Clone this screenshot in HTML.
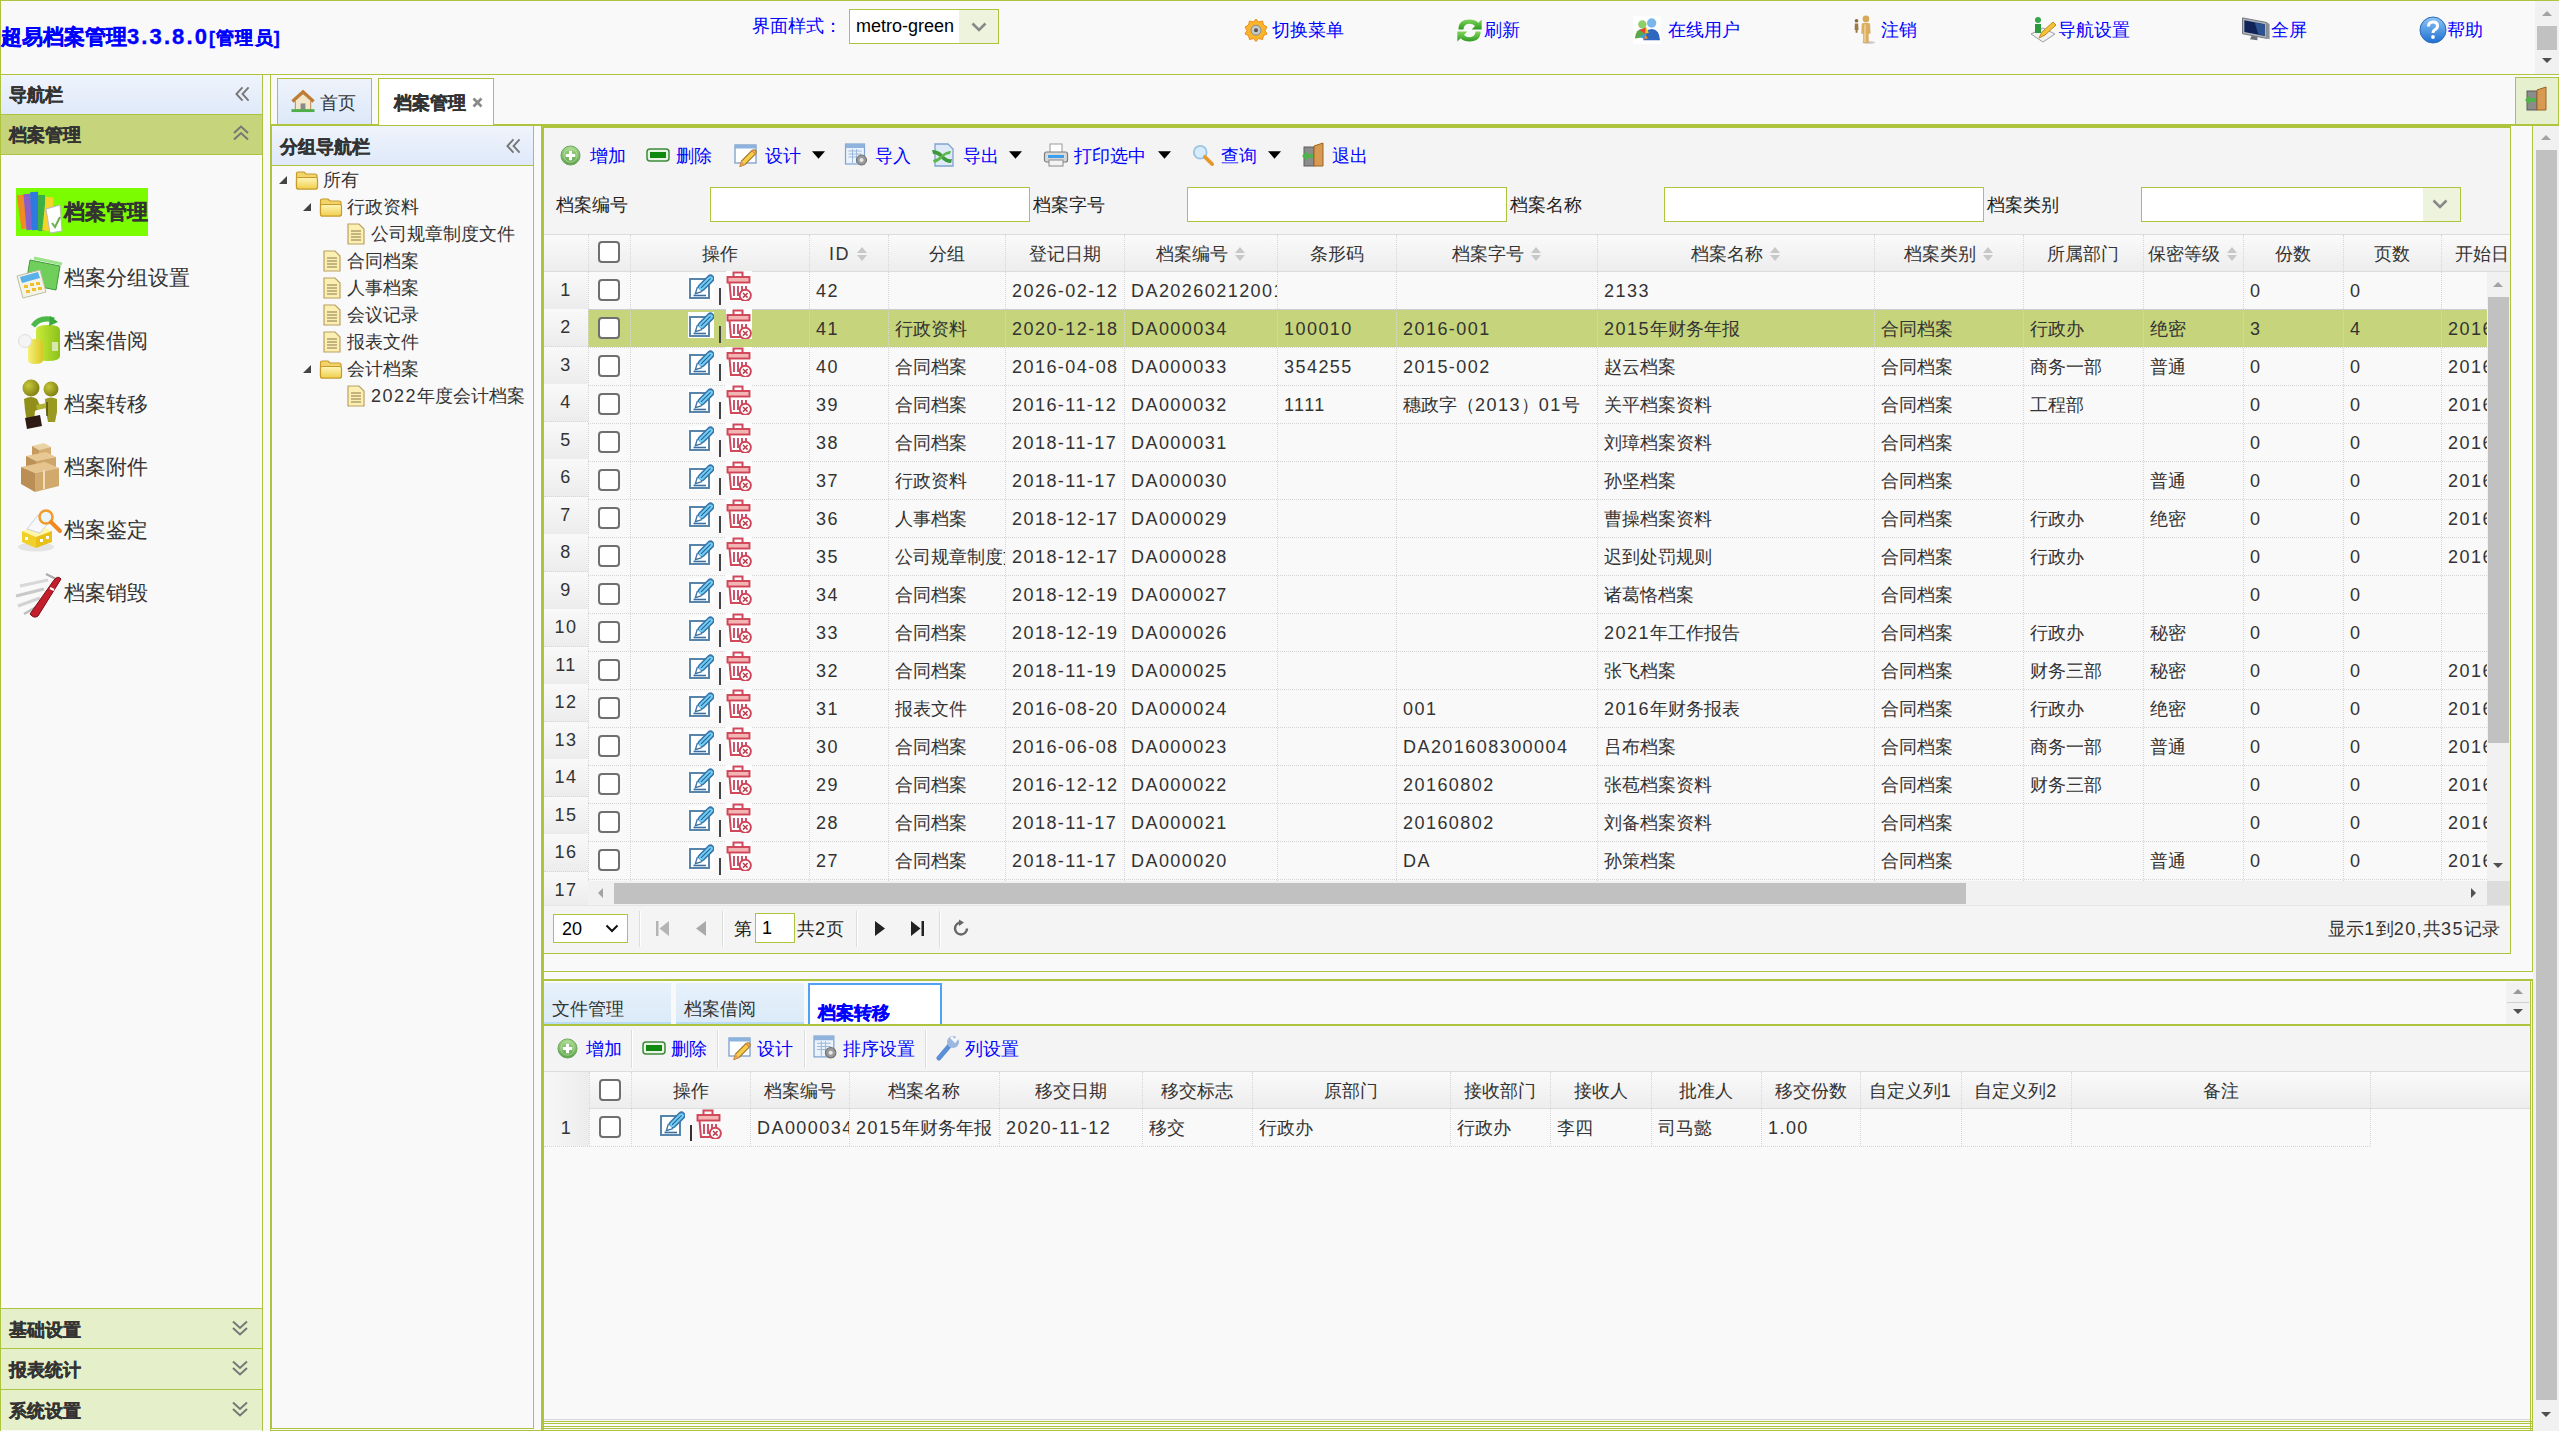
<!DOCTYPE html>
<html><head><meta charset="utf-8"><title>超易档案管理</title><style>
*{box-sizing:border-box;margin:0;padding:0}
html,body{width:2559px;height:1431px;overflow:hidden;background:#f9f9f9;font-family:"Liberation Sans",sans-serif;font-size:18px;color:#333}
.a{position:absolute}
i{font-style:normal}
.l{letter-spacing:1.45px}
.hl{position:absolute;height:1px;background:#afc43e}
.vl{position:absolute;width:1px;background:#afc43e}
.blue{color:#0000ff}
.hbtn{position:absolute;top:10px;height:36px;line-height:36px;color:#0000ff;font-size:18px;white-space:nowrap}
.navhd{background:linear-gradient(#eff4fc,#dfe9f9)}
.acc{background:#e5efc9}
.tb{position:absolute;top:136px;height:38px;line-height:38px;color:#0000ff;white-space:nowrap}
.tb svg{position:absolute}
.cell{position:absolute;white-space:nowrap;overflow:hidden}
.ck{position:absolute;width:22px;height:22px;border:2px solid #6f6f6f;border-radius:4px;background:#fff}
.dv{position:absolute;width:0;border-left:1px dotted #cfcfcf}
.dh{position:absolute;height:0;border-top:1px dotted #cfcfcf}
.sort{position:absolute;width:12px;height:16px}
.tree{position:absolute;height:27px;line-height:27px;white-space:nowrap;color:#333}
</style></head><body>
<svg width="0" height="0" style="position:absolute">
<defs>
<linearGradient id="gGreenBall" x1="0" y1="0" x2="0" y2="1"><stop offset="0" stop-color="#a6d88a"/><stop offset="1" stop-color="#5da24a"/></linearGradient>
<linearGradient id="gYellow" x1="0" y1="0" x2="0" y2="1"><stop offset="0" stop-color="#fff6b8"/><stop offset="1" stop-color="#f0cf4c"/></linearGradient>
<linearGradient id="gBlueBall" x1="0" y1="0" x2="0" y2="1"><stop offset="0" stop-color="#8cc6f7"/><stop offset="1" stop-color="#1f6fd0"/></linearGradient>
<linearGradient id="gRefresh" x1="0" y1="0" x2="0" y2="1"><stop offset="0" stop-color="#7fd65a"/><stop offset="1" stop-color="#2f9a22"/></linearGradient>

<symbol id="i-edit" viewBox="0 0 26 26">
 <rect x="2" y="5" width="19" height="19" fill="#fff" stroke="#4f7fa8" stroke-width="1.9"/>
 <g transform="rotate(45 15.5 11.5)">
  <rect x="12.3" y="-1.5" width="6.4" height="19" rx="3.2" fill="#6fd0f7" stroke="#3a74a8" stroke-width="1.6"/>
  <path d="M15.5 1.5 V15" stroke="#2f5f90" stroke-width="1.1"/>
  <path d="M12.3 17 L15.5 23 L18.7 17" fill="#fff" stroke="#3a74a8" stroke-width="1.4"/>
 </g>
 <path d="M5.5 21.5 H18" stroke="#3a6e9e" stroke-width="1.6"/>
</symbol>
<symbol id="i-del" viewBox="0 0 26 30">
 <path d="M7.5 6 V1.5 H16.5 V6" fill="none" stroke="#d0485a" stroke-width="2"/>
 <rect x="1.5" y="6" width="22" height="5.5" fill="#f3b4b4" stroke="#cf4456" stroke-width="1.9"/>
 <path d="M3.5 11.5 L5 28 H15" fill="none" stroke="#d0485a" stroke-width="2"/>
 <path d="M8 15 V25 M12 15 V25 M16 15 V21 M20 15 V19" stroke="#c8405a" stroke-width="1.8"/>
 <circle cx="19.3" cy="24.3" r="5.6" fill="#fff" stroke="#cf4456" stroke-width="1.9"/>
 <path d="M17 22 L21.6 26.6 M21.6 22 L17 26.6" stroke="#b9404f" stroke-width="1.5"/>
</symbol>
<symbol id="i-add" viewBox="0 0 22 22">
 <circle cx="11" cy="11" r="10" fill="url(#gGreenBall)" stroke="#6aa45a" stroke-width="1"/>
 <circle cx="11" cy="11" r="7" fill="none" stroke="#cdeec0" stroke-width="1" opacity=".6"/>
 <path d="M11 6 V16 M6 11 H16" stroke="#fff" stroke-width="3.2"/>
</symbol>
<symbol id="i-remove" viewBox="0 0 24 16">
 <rect x="1" y="2" width="22" height="12" rx="3" fill="#e9f3e6" stroke="#3e8a3a" stroke-width="1.5"/>
 <rect x="4" y="5" width="16" height="6" fill="#0f8a0f"/>
</symbol>
<symbol id="i-design" viewBox="0 0 24 24">
 <rect x="1" y="2" width="21" height="18" fill="#fff" stroke="#7a9fcc" stroke-width="1.3"/>
 <rect x="1" y="2" width="21" height="3.5" fill="#8cb2de"/>
 <path d="M6 23.5 L7.5 18 L18 7.5 Q20 6 21.5 7.5 Q23 9 21.5 11 L11 21.5 Z" fill="#f5cf4a" stroke="#a8762a" stroke-width="1.1"/>
 <path d="M6 23.5 L7.5 18 L11 21.5 Z" fill="#e9a25a"/>
 <path d="M18 7.5 L21.5 11" stroke="#e0894a" stroke-width="1.5"/>
</symbol>
<symbol id="i-import" viewBox="0 0 24 24">
 <rect x="1" y="1" width="19" height="20" fill="#eaf2fb" stroke="#7ea3cf" stroke-width="1.2"/>
 <rect x="1" y="1" width="19" height="4" fill="#8fb3dc"/>
 <path d="M4 8 H17 M4 11 H17 M4 14 H12 M8 6 V20 M12 6 V20" stroke="#9db9d9" stroke-width="1"/>
 <circle cx="17" cy="17" r="5" fill="#9a9a9a" stroke="#6c6c6c" stroke-width="1"/>
 <circle cx="17" cy="17" r="2" fill="#e8e8e8"/>
</symbol>
<symbol id="i-export" viewBox="0 0 24 24">
 <path d="M4 1 H17 L22 6 V23 H4 Z" fill="#dfeaf7" stroke="#7ea3cf" stroke-width="1.3"/>
 <path d="M1 7 Q8 7 12 12 Q16 17 21 16 L20 20 Q14 20 10 15 Q6 11 2 11 Z" fill="#3d9a3a"/>
 <path d="M2 17 Q8 15 11 12 Q15 8 20 8 L19 11 Q15 11 12 14 Q9 18 3 20 Z" fill="#5cb84a"/>
</symbol>
<symbol id="i-print" viewBox="0 0 26 24">
 <rect x="7" y="1" width="12" height="9" fill="#fff" stroke="#9a9a9a" stroke-width="1"/>
 <rect x="1.5" y="9" width="23" height="10" rx="2" fill="#d9d9d9" stroke="#7c7c7c" stroke-width="1.2"/>
 <rect x="5" y="12" width="16" height="3" fill="#3d9df0"/>
 <rect x="6" y="17" width="14" height="6" fill="#f2f2f2" stroke="#8a8a8a" stroke-width="1"/>
</symbol>
<symbol id="i-search" viewBox="0 0 24 24">
 <circle cx="9" cy="9" r="7" fill="#d6ecfb" stroke="#9dc4e0" stroke-width="2"/>
 <path d="M14 14 L22 22" stroke="#e49a2c" stroke-width="4" stroke-linecap="round"/>
</symbol>
<symbol id="i-exit" viewBox="0 0 26 26">
 <rect x="3" y="5" width="10" height="19" fill="#8c8c8c" stroke="#5c5c5c" stroke-width="1"/>
 <path d="M13 24 V4 L22 1 V24 Z" fill="#d89a52" stroke="#9c6420" stroke-width="1"/>
 <path d="M1 14 L6 9 V12 H12 V16 H6 V19 Z" fill="#4db34a"/>
</symbol>
<symbol id="i-folder" viewBox="0 0 24 20">
 <path d="M1.5 4 Q1.5 2 3.5 2 H9 L11 4 H20 Q22 4 22 6 V17 Q22 19 20 19 H3.5 Q1.5 19 1.5 17 Z" fill="#f2d56a" stroke="#c79a2a" stroke-width="1.2"/>
 <path d="M1.5 9 Q1.5 7.5 3.5 7.5 H20.5 Q22.5 7.5 22.5 9 V17 Q22.5 19 20.5 19 H3.5 Q1.5 19 1.5 17 Z" fill="url(#gYellow)" stroke="#c79a2a" stroke-width="1.2"/>
</symbol>
<symbol id="i-file" viewBox="0 0 18 22">
 <path d="M1 1 H12 L17 6 V21 H1 Z" fill="#fbefb2" stroke="#b9a163" stroke-width="1.2"/>
 <path d="M4 8 H14 M4 11 H14 M4 14 H14 M4 17 H14" stroke="#8c7a4a" stroke-width="1.1"/>
</symbol>
<symbol id="i-home" viewBox="0 0 26 24">
 <path d="M2 12 L13 2 L24 12" fill="none" stroke="#c07a34" stroke-width="3.5"/>
 <path d="M5 11 L13 4 L21 11 V21 H5 Z" fill="#f4e6c8" stroke="#b8864a" stroke-width="1"/>
 <rect x="10.5" y="14" width="5" height="7" fill="#8a8a8a"/>
 <path d="M1 21.5 H25" stroke="#4fae4a" stroke-width="3"/>
</symbol>
<symbol id="i-gear" viewBox="0 0 24 24">
 <path d="M12 1 L14.5 4 L18.5 3 L19.5 7 L23 9 L21 12.5 L23 16 L19.5 17.5 L18.5 21.5 L14.5 20.5 L12 23.5 L9.5 20.5 L5.5 21.5 L4.5 17.5 L1 16 L3 12.5 L1 9 L4.5 7 L5.5 3 L9.5 4 Z" fill="#f9b62a" stroke="#f08a1a" stroke-width="1"/>
 <circle cx="12" cy="12.2" r="5" fill="#c9c9c9" stroke="#8a8a8a"/>
 <circle cx="12" cy="12.2" r="2" fill="#555"/>
</symbol>
<symbol id="i-refresh" viewBox="0 0 28 28">
 <path d="M4 13 Q4 4 14 4 Q19 4 22 7 L25 4 V13 H16 L19 10 Q17 8 14 8 Q9 8 8.5 13 Z" fill="url(#gRefresh)"/>
 <path d="M24 15 Q24 24 14 24 Q9 24 6 21 L3 24 V15 H12 L9 18 Q11 20 14 20 Q19 20 19.5 15 Z" fill="url(#gRefresh)"/>
</symbol>
<symbol id="i-users" viewBox="0 0 30 30">
 <rect x="0" y="0" width="30" height="30" fill="#fff"/>
 <circle cx="10" cy="9" r="4.5" fill="#8fcf6a"/>
 <path d="M2 24 Q3 14 10 14 Q16 14 17 22 Z" fill="#5aa84a"/>
 <circle cx="20" cy="7.5" r="5" fill="#7ab8ec"/>
 <path d="M11 26 Q12 14 20 14 Q28 14 29 26 Z" fill="#2f66c0"/>
 <path d="M7 15 L14 12 L13 19 Z" fill="#e8412f"/><path d="M14 12 L17 18 L13 19 Z" fill="#f6c22a"/>
 <path d="M7 22 L13 19 L12 25 Z" fill="#3aa0e0"/><path d="M13 19 L16 24 L12 25 Z" fill="#f08a1c"/>
</symbol>
<symbol id="i-person" viewBox="0 0 26 32">
 <ellipse cx="17" cy="29.5" rx="7" ry="1.6" fill="#ccc"/>
 <circle cx="3.8" cy="6" r="2" fill="#8a6a3a"/>
 <path d="M2 9 H5.6 L6 16 H5 V19 H2.8 V16 H1.8 Z" fill="#9c7a45"/>
 <circle cx="14" cy="4" r="3.6" fill="#d6a95a"/>
 <path d="M9.5 9 Q14 7.5 18.5 9 L19 20 H17 V30 H11 V20 H9 Z" fill="#d9ad62"/>
 <path d="M13 10 V29" stroke="#f2d69a" stroke-width="1.5"/>
</symbol>
<symbol id="i-navset" viewBox="0 0 28 28">
 <path d="M2 18 L14 26 L26 18 L14 12 Z" fill="#f2f2f2" stroke="#9c9c9c"/>
 <circle cx="9" cy="4" r="3" fill="#35a84a"/>
 <path d="M6 8 H12 V17 H6 Z" fill="#2b9a3f"/>
 <path d="M10 22 L13 16 L24 6 L27 9 L16 19 Z" fill="#f3c23a" stroke="#c28a20" stroke-width="1"/>
</symbol>
<symbol id="i-monitor" viewBox="0 0 32 30">
 <path d="M1 2 L27 7 V24 L1 19 Z" fill="#aeb4ba" stroke="#6d737a" stroke-width="1"/>
 <path d="M3 4.5 L25 8.8 V21.5 L3 17.2 Z" fill="#10245a"/>
 <path d="M14 7 L25 9 V21 L18 19.6 Z" fill="#3a66a8" opacity=".7"/>
 <path d="M27 7 L30 8.5 V25 L27 24 Z" fill="#8a9096"/>
 <path d="M11 21 L17 22.5 V26 L9 25 Z" fill="#6a7078"/>
</symbol>
<symbol id="i-help" viewBox="0 0 28 28">
 <circle cx="14" cy="14" r="13" fill="url(#gBlueBall)" stroke="#2a6ab8" stroke-width="1"/>
 <path d="M9.5 10.5 Q9.5 6 14 6 Q18.5 6 18.5 10 Q18.5 12.5 15.5 14 Q14 15 14 17" fill="none" stroke="#fff" stroke-width="3"/>
 <circle cx="14" cy="21" r="1.9" fill="#fff"/>
</symbol>
<symbol id="i-caret" viewBox="0 0 14 8"><path d="M0 0 H14 L7 8 Z" fill="#000"/></symbol>
<symbol id="i-sort" viewBox="0 0 12 16"><path d="M1 7 L6 1 L11 7 Z M1 9 L6 15 L11 9 Z" fill="#c8c8c8"/></symbol>
<symbol id="i-chev" viewBox="0 0 16 10"><path d="M1.5 1.5 L8 8 L14.5 1.5" fill="none" stroke="#888" stroke-width="2.6"/></symbol>
<symbol id="i-dleft" viewBox="0 0 16 16"><path d="M8 1 L1.5 8 L8 15 M14.5 1 L8 8 L14.5 15" fill="none" stroke="#777" stroke-width="2"/></symbol>
<symbol id="i-dup" viewBox="0 0 16 16"><path d="M1 8 L8 1.5 L15 8 M1 14.5 L8 8 L15 14.5" fill="none" stroke="#777" stroke-width="2"/></symbol>
<symbol id="i-ddown" viewBox="0 0 16 16"><path d="M1 1.5 L8 8 L15 1.5 M1 8 L8 14.5 L15 8" fill="none" stroke="#777" stroke-width="2"/></symbol>
<symbol id="i-tri" viewBox="0 0 10 10"><path d="M9 1 V9 H1 Z" fill="#444"/></symbol>
</defs></svg>
<div class="a" style="left:0px;top:0px;width:2559px;height:1px;background:#afc43e"></div>
<div class="a" style="left:0px;top:0px;width:1px;height:1431px;background:#afc43e"></div>
<div class="a" style="left:1px;top:18px;height:36px;padding-top:1px;line-height:36px;color:#0000ff;font-weight:bold;font-size:21px;white-space:nowrap;-webkit-text-stroke:0.35px currentColor">超易档案管理<i style="letter-spacing:2.1px;font-size:22px">3.3.8.0</i><span style="font-size:18px;letter-spacing:1.2px">[管理员]</span></div>
<div class="a" style="left:752px;top:7px;height:36px;padding-top:1px;line-height:36px;color:#0000ff;font-size:18px;white-space:nowrap">界面样式：</div>
<div class="a" style="left:849px;top:9px;width:150px;height:35px;border:1px solid #afc43e;background:#fff"></div>
<div class="a" style="left:959px;top:10px;width:39px;height:33px;background:#eef3de"></div>
<svg class="a" style="left:971px;top:22px;width:16px;height:10px;"><use href="#i-chev"/></svg>
<div class="a" style="left:856px;top:8px;height:35px;padding-top:1px;line-height:35px;color:#000;font-size:18px">metro-green</div>
<svg class="a" style="left:1244px;top:17px;width:24px;height:26px;"><use href="#i-gear"/></svg>
<div class="a" style="left:1272px;top:11px;height:36px;padding-top:1px;line-height:36px;color:#0000ff;font-size:18px;white-space:nowrap">切换菜单</div>
<svg class="a" style="left:1454px;top:14px;width:31px;height:33px;"><use href="#i-refresh"/></svg>
<div class="a" style="left:1484px;top:11px;height:36px;padding-top:1px;line-height:36px;color:#0000ff;font-size:18px;white-space:nowrap">刷新</div>
<svg class="a" style="left:1632px;top:16px;width:30px;height:28px;"><use href="#i-users"/></svg>
<div class="a" style="left:1668px;top:11px;height:36px;padding-top:1px;line-height:36px;color:#0000ff;font-size:18px;white-space:nowrap">在线用户</div>
<svg class="a" style="left:1853px;top:15px;width:24px;height:30px;"><use href="#i-person"/></svg>
<div class="a" style="left:1881px;top:11px;height:36px;padding-top:1px;line-height:36px;color:#0000ff;font-size:18px;white-space:nowrap">注销</div>
<svg class="a" style="left:2029px;top:16px;width:28px;height:28px;"><use href="#i-navset"/></svg>
<div class="a" style="left:2058px;top:11px;height:36px;padding-top:1px;line-height:36px;color:#0000ff;font-size:18px;white-space:nowrap">导航设置</div>
<svg class="a" style="left:2241px;top:16px;width:31px;height:28px;"><use href="#i-monitor"/></svg>
<div class="a" style="left:2271px;top:11px;height:36px;padding-top:1px;line-height:36px;color:#0000ff;font-size:18px;white-space:nowrap">全屏</div>
<svg class="a" style="left:2419px;top:16px;width:28px;height:28px;"><use href="#i-help"/></svg>
<div class="a" style="left:2447px;top:11px;height:36px;padding-top:1px;line-height:36px;color:#0000ff;font-size:18px;white-space:nowrap">帮助</div>
<div class="a" style="left:2535px;top:1px;width:24px;height:73px;background:#f1f1f1"></div>
<div class="a" style="left:2537px;top:26px;width:20px;height:24px;background:#c1c1c1"></div>
<svg class="a" style="left:2540px;top:8px;width:14px;height:10px"><path d="M2 8 L7 3 L12 8 Z" fill="#a3a3a3"/></svg>
<svg class="a" style="left:2540px;top:56px;width:14px;height:10px"><path d="M2 2 L7 7 L12 2 Z" fill="#505050"/></svg>
<div class="a" style="left:0px;top:74px;width:2559px;height:1px;background:#afc43e"></div>
<div class="a navhd" style="left:1px;top:75px;width:261px;height:39px;"></div>
<div class="a" style="left:9px;top:75px;height:39px;padding-top:1px;line-height:39px;font-weight:bold;font-size:18px;color:#333;-webkit-text-stroke:0.35px currentColor">导航栏</div>
<svg class="a" style="left:235px;top:86px;width:15px;height:16px;"><use href="#i-dleft"/></svg>
<div class="a" style="left:1px;top:114px;width:261px;height:1px;background:#afc43e"></div>
<div class="a" style="left:1px;top:115px;width:261px;height:39px;background:#c6d47b"></div>
<div class="a" style="left:9px;top:115px;height:39px;padding-top:1px;line-height:39px;font-weight:bold;font-size:18px;color:#333;-webkit-text-stroke:0.35px currentColor">档案管理</div>
<svg class="a" style="left:233px;top:125px;width:16px;height:16px;"><use href="#i-dup"/></svg>
<div class="a" style="left:1px;top:154px;width:261px;height:1px;background:#afc43e"></div>
<div class="a" style="left:262px;top:75px;width:1px;height:1356px;background:#afc43e"></div>
<div class="a" style="left:16px;top:188px;width:132px;height:48px;background:#7cfc00"></div>
<svg class="a" style="left:16px;top:189px;width:48px;height:46px" viewBox="0 0 48 46">
<rect x="3" y="6" width="7" height="34" fill="#f08a24" transform="rotate(-8 6 23)"/>
<rect x="9" y="5" width="7" height="36" fill="#8a5fc8" transform="rotate(-5 12 23)"/>
<rect x="15" y="3" width="8" height="38" fill="#2f7ae0" transform="rotate(-3 19 22)"/>
<rect x="22" y="6" width="7" height="36" fill="#3cb043"/>
<rect x="28" y="8" width="8" height="34" fill="#f5d327" transform="rotate(6 32 25)"/>
<path d="M30 20 L44 16 L46 42 L34 44 Z" fill="#fff" stroke="#bbb"/>
<path d="M36 34 L39 38 L44 28" fill="none" stroke="#6ab04c" stroke-width="2"/>
</svg>
<div class="a" style="left:64px;top:191px;height:40px;padding-top:1px;line-height:40px;font-size:21px;color:#333;white-space:nowrap;font-weight:bold;-webkit-text-stroke:0.35px currentColor">档案管理</div>
<svg class="a" style="left:16px;top:256px;width:48px;height:44px" viewBox="0 0 48 44">
<path d="M14 4 L44 10 L40 34 L10 28 Z" fill="#6fcf5a" stroke="#3f9a3a"/>
<path d="M18 2 L46 8" stroke="#9be38a" stroke-width="3"/>
<path d="M1 20 L24 14 L30 36 L7 42 Z" fill="#f3f3e6" stroke="#bdbda0"/>
<path d="M4 21 L22 16 L24 22 L6 27 Z" fill="#5ab0e8"/>
<g fill="#f0c02a"><rect x="8" y="29" width="4" height="3"/><rect x="14" y="27" width="4" height="3"/><rect x="20" y="26" width="4" height="3"/><rect x="10" y="34" width="4" height="3"/><rect x="16" y="32" width="4" height="3"/><rect x="22" y="31" width="4" height="3"/></g>
</svg>
<div class="a" style="left:64px;top:257px;height:40px;padding-top:1px;line-height:40px;font-size:21px;color:#333;white-space:nowrap;">档案分组设置</div>
<svg class="a" style="left:16px;top:316px;width:48px;height:50px" viewBox="0 0 48 50">
<defs><linearGradient id="gb1" x1="0" y1="0" x2="1" y2="0"><stop offset="0" stop-color="#c9ea3a"/><stop offset="1" stop-color="#8cc21a"/></linearGradient>
<linearGradient id="gb2" x1="0" y1="0" x2="1" y2="0"><stop offset="0" stop-color="#f6f07a"/><stop offset="1" stop-color="#d8c822"/></linearGradient></defs>
<path d="M20 14 Q20 9 32 9 Q44 9 44 14 V40 Q44 45 32 45 Q20 45 20 40 Z" fill="url(#gb1)"/>
<rect x="36" y="26" width="6" height="9" fill="#dfe9c0" opacity=".9"/>
<path d="M12 27 Q12 23 19 23 Q27 23 27 27 V44 Q27 48 19 48 Q12 48 12 44 Z" fill="url(#gb2)"/>
<circle cx="9" cy="25" r="6.5" fill="#f4f4f4" stroke="#ddd"/>
<path d="M17 10 Q24 0 38 4" fill="none" stroke="#4cb84a" stroke-width="5"/>
<path d="M34 0 L42 6 L33 10 Z" fill="#3aa83a"/>
</svg>
<div class="a" style="left:64px;top:320px;height:40px;padding-top:1px;line-height:40px;font-size:21px;color:#333;white-space:nowrap;">档案借阅</div>
<svg class="a" style="left:20px;top:378px;width:42px;height:52px" viewBox="0 0 42 52">
<defs><radialGradient id="gh" cx=".35" cy=".35" r=".7"><stop offset="0" stop-color="#c8c83a"/><stop offset="1" stop-color="#7e7e12"/></radialGradient></defs>
<circle cx="11" cy="10" r="8.5" fill="url(#gh)"/>
<circle cx="31" cy="11" r="7.5" fill="url(#gh)"/>
<path d="M4 21 Q11 17 17 21 L21 30 L15 33 L14 44 H7 L5 32 Z" fill="#8f8f1a"/>
<path d="M25 21 Q31 18 37 21 L37 34 L35 44 H28 L26 33 Z" fill="#9a9a22"/>
<path d="M16 27 L27 25 L27 30 L17 32 Z" fill="#b2b232"/>
<path d="M27 24 V38" stroke="#3a3a10" stroke-width="1.2"/>
<path d="M5 40 L20 37 L22 48 L7 51 Z" fill="#2e1c14"/>
</svg>
<div class="a" style="left:64px;top:383px;height:40px;padding-top:1px;line-height:40px;font-size:21px;color:#333;white-space:nowrap;">档案转移</div>
<svg class="a" style="left:18px;top:440px;width:44px;height:54px" viewBox="0 0 44 54">
<path d="M14 6 L26 3 L33 7 L21 10 Z" fill="#ecd3a6"/><path d="M21 10 L33 7 V17 L21 20 Z" fill="#d4ae72"/><path d="M14 6 L21 10 V20 L14 16 Z" fill="#c49a5e"/>
<path d="M8 16 L28 12 L38 17 L18 21 Z" fill="#e8c994"/><path d="M18 21 L38 17 V27 L18 31 Z" fill="#cfa66a"/><path d="M8 16 L18 21 V31 L8 26 Z" fill="#bd9258"/>
<path d="M3 27 L27 22 L41 28 L17 33 Z" fill="#e6c48e"/><path d="M17 33 L41 28 V46 L17 52 Z" fill="#d2a96c"/><path d="M3 27 L17 33 V52 L3 44 Z" fill="#ba8e55"/>
<path d="M26 30 V49" stroke="#f0dcb6" stroke-width="2"/>
</svg>
<div class="a" style="left:64px;top:446px;height:40px;padding-top:1px;line-height:40px;font-size:21px;color:#333;white-space:nowrap;">档案附件</div>
<svg class="a" style="left:16px;top:507px;width:48px;height:46px" viewBox="0 0 48 46">
<ellipse cx="20" cy="40" rx="18" ry="4.5" fill="#e4e4e4"/>
<path d="M6 24 L22 18 L36 24 L20 30 Z" fill="#fff6a8"/><path d="M6 24 L20 30 V41 L6 35 Z" fill="#f2d02a"/><path d="M20 30 L36 24 V35 L20 41 Z" fill="#e9c018"/>
<g fill="#fff"><rect x="9" y="30" width="3" height="3"/><rect x="24" y="32" width="3" height="3"/><rect x="30" y="29" width="3" height="3"/></g>
<path d="M11 22 L22 8 L34 14 L24 26 Z" fill="#f7f9fc" stroke="#c9d3df"/>
<circle cx="30" cy="10" r="6.5" fill="#eaf4fb" stroke="#f29b2a" stroke-width="2.5"/>
<path d="M35 15 L44 24" stroke="#f08a20" stroke-width="4" stroke-linecap="round"/>
</svg>
<div class="a" style="left:64px;top:509px;height:40px;padding-top:1px;line-height:40px;font-size:21px;color:#333;white-space:nowrap;">档案鉴定</div>
<svg class="a" style="left:14px;top:570px;width:50px;height:48px" viewBox="0 0 50 48">
<path d="M6 16 L34 10" stroke="#d8d8d8" stroke-width="3"/><path d="M2 26 L30 19" stroke="#c9c9c9" stroke-width="3"/>
<path d="M4 36 L26 28" stroke="#d2d2d2" stroke-width="3"/><path d="M10 44 L24 36" stroke="#bdbdbd" stroke-width="2.5"/>
<path d="M32 4 L42 9" stroke="#aaa" stroke-width="2"/>
<path d="M16 44 L40 10 Q44 5 47 9 L24 46 Q20 49 16 44 Z" fill="#c41e2c" stroke="#7c0c14"/>
<path d="M36 18 L40 20" stroke="#fff" stroke-width="2"/>
</svg>
<div class="a" style="left:64px;top:572px;height:40px;padding-top:1px;line-height:40px;font-size:21px;color:#333;white-space:nowrap;">档案销毁</div>
<div class="a" style="left:1px;top:1308px;width:261px;height:1px;background:#afc43e"></div>
<div class="a" style="left:1px;top:1309px;width:261px;height:40px;background:#e5efc9"></div>
<div class="a" style="left:9px;top:1309px;height:40px;padding-top:1px;line-height:40px;font-weight:bold;font-size:18px;color:#333;-webkit-text-stroke:0.35px currentColor">基础设置</div>
<svg class="a" style="left:232px;top:1320px;width:16px;height:16px;"><use href="#i-ddown"/></svg>
<div class="a" style="left:1px;top:1348px;width:261px;height:1px;background:#afc43e"></div>
<div class="a" style="left:1px;top:1349px;width:261px;height:40px;background:#e5efc9"></div>
<div class="a" style="left:9px;top:1349px;height:40px;padding-top:1px;line-height:40px;font-weight:bold;font-size:18px;color:#333;-webkit-text-stroke:0.35px currentColor">报表统计</div>
<svg class="a" style="left:232px;top:1360px;width:16px;height:16px;"><use href="#i-ddown"/></svg>
<div class="a" style="left:1px;top:1389px;width:261px;height:1px;background:#afc43e"></div>
<div class="a" style="left:1px;top:1390px;width:261px;height:40px;background:#e5efc9"></div>
<div class="a" style="left:9px;top:1390px;height:40px;padding-top:1px;line-height:40px;font-weight:bold;font-size:18px;color:#333;-webkit-text-stroke:0.35px currentColor">系统设置</div>
<svg class="a" style="left:232px;top:1401px;width:16px;height:16px;"><use href="#i-ddown"/></svg>
<div class="a" style="left:270px;top:75px;width:1px;height:1356px;background:#afc43e"></div>
<div class="a" style="left:277px;top:78px;width:95px;height:47px;border:1px solid #afc43e;border-bottom:none;background:linear-gradient(#eef3fb,#dce8f8)"></div>
<svg class="a" style="left:290px;top:90px;width:26px;height:23px;"><use href="#i-home"/></svg>
<div class="a" style="left:320px;top:82px;height:40px;padding-top:1px;line-height:40px;font-size:18px;color:#333">首页</div>
<div class="a" style="left:378px;top:78px;width:116px;height:47px;border:1px solid #afc43e;border-bottom:none;background:#fff"></div>
<div class="a" style="left:394px;top:82px;height:40px;padding-top:1px;line-height:40px;font-size:18px;font-weight:bold;color:#333;-webkit-text-stroke:0.35px currentColor">档案管理</div>
<svg class="a" style="left:472px;top:97px;width:11px;height:11px"><path d="M1.5 1.5 L9.5 9.5 M9.5 1.5 L1.5 9.5" stroke="#8a8a8a" stroke-width="2.6"/></svg>
<div class="a" style="left:2515px;top:77px;width:44px;height:48px;border:1px solid #afc43e;background:#e6f0cf"></div>
<svg class="a" style="left:2524px;top:86px;width:26px;height:26px;"><use href="#i-exit"/></svg>
<div class="a" style="left:270px;top:124px;width:108px;height:1px;background:#afc43e"></div>
<div class="a" style="left:493px;top:124px;width:2066px;height:1px;background:#afc43e"></div>
<div class="a" style="left:270px;top:125px;width:2289px;height:1px;background:#afc43e"></div>
<div class="a" style="left:271px;top:126px;width:263px;height:1303px;border-left:1px solid #afc43e;border-right:1px solid #afc43e;border-bottom:1px solid #afc43e;background:#f9f9f9"></div>
<div class="a navhd" style="left:272px;top:126px;width:261px;height:39px;"></div>
<div class="a" style="left:280px;top:127px;height:39px;padding-top:1px;line-height:39px;font-weight:bold;font-size:18px;color:#333;-webkit-text-stroke:0.35px currentColor">分组导航栏</div>
<svg class="a" style="left:506px;top:138px;width:15px;height:16px;"><use href="#i-dleft"/></svg>
<div class="a" style="left:272px;top:165px;width:261px;height:1px;background:#afc43e"></div>
<svg class="a" style="left:278px;top:175px;width:10px;height:10px;"><use href="#i-tri"/></svg>
<svg class="a" style="left:295px;top:170px;width:24px;height:20px;"><use href="#i-folder"/></svg>
<div class="a" style="left:323px;top:165px;height:28px;padding-top:1px;line-height:28px;font-size:18px;color:#333;white-space:nowrap">所有</div>
<svg class="a" style="left:302px;top:202px;width:10px;height:10px;"><use href="#i-tri"/></svg>
<svg class="a" style="left:319px;top:197px;width:24px;height:20px;"><use href="#i-folder"/></svg>
<div class="a" style="left:347px;top:192px;height:28px;padding-top:1px;line-height:28px;font-size:18px;color:#333;white-space:nowrap">行政资料</div>
<svg class="a" style="left:347px;top:223px;width:18px;height:22px;"><use href="#i-file"/></svg>
<div class="a" style="left:371px;top:219px;height:28px;padding-top:1px;line-height:28px;font-size:18px;color:#333;white-space:nowrap">公司规章制度文件</div>
<svg class="a" style="left:323px;top:250px;width:18px;height:22px;"><use href="#i-file"/></svg>
<div class="a" style="left:347px;top:246px;height:28px;padding-top:1px;line-height:28px;font-size:18px;color:#333;white-space:nowrap">合同档案</div>
<svg class="a" style="left:323px;top:277px;width:18px;height:22px;"><use href="#i-file"/></svg>
<div class="a" style="left:347px;top:273px;height:28px;padding-top:1px;line-height:28px;font-size:18px;color:#333;white-space:nowrap">人事档案</div>
<svg class="a" style="left:323px;top:304px;width:18px;height:22px;"><use href="#i-file"/></svg>
<div class="a" style="left:347px;top:300px;height:28px;padding-top:1px;line-height:28px;font-size:18px;color:#333;white-space:nowrap">会议记录</div>
<svg class="a" style="left:323px;top:331px;width:18px;height:22px;"><use href="#i-file"/></svg>
<div class="a" style="left:347px;top:327px;height:28px;padding-top:1px;line-height:28px;font-size:18px;color:#333;white-space:nowrap">报表文件</div>
<svg class="a" style="left:302px;top:364px;width:10px;height:10px;"><use href="#i-tri"/></svg>
<svg class="a" style="left:319px;top:359px;width:24px;height:20px;"><use href="#i-folder"/></svg>
<div class="a" style="left:347px;top:354px;height:28px;padding-top:1px;line-height:28px;font-size:18px;color:#333;white-space:nowrap">会计档案</div>
<svg class="a" style="left:347px;top:385px;width:18px;height:22px;"><use href="#i-file"/></svg>
<div class="a" style="left:371px;top:381px;height:28px;padding-top:1px;line-height:28px;font-size:18px;color:#333;white-space:nowrap"><i class="l">2022</i>年度会计档案</div>
<div class="a" style="left:541px;top:126px;width:1992px;height:846px;border-right:1px solid #afc43e;border-bottom:1px solid #afc43e;background:#f9f9f9"></div>
<div class="a" style="left:541px;top:126px;width:1970px;height:828px;border-left:3px solid #afc43e;border-top:2px solid #afc43e;border-right:1px solid #afc43e;border-bottom:1px solid #afc43e;background:#f4f4f4"></div>
<svg class="a" style="left:560px;top:145px;width:21px;height:21px;"><use href="#i-add"/></svg>
<div class="a" style="left:590px;top:136px;height:38px;padding-top:1px;line-height:38px;color:#0000ff;font-size:18px;white-space:nowrap">增加</div>
<svg class="a" style="left:646px;top:147px;width:24px;height:16px;"><use href="#i-remove"/></svg>
<div class="a" style="left:676px;top:136px;height:38px;padding-top:1px;line-height:38px;color:#0000ff;font-size:18px;white-space:nowrap">删除</div>
<svg class="a" style="left:734px;top:143px;width:24px;height:24px;"><use href="#i-design"/></svg>
<div class="a" style="left:765px;top:136px;height:38px;padding-top:1px;line-height:38px;color:#0000ff;font-size:18px;white-space:nowrap">设计</div>
<svg class="a" style="left:812px;top:151px;width:13px;height:8px;"><use href="#i-caret"/></svg>
<svg class="a" style="left:844px;top:143px;width:25px;height:24px;"><use href="#i-import"/></svg>
<div class="a" style="left:875px;top:136px;height:38px;padding-top:1px;line-height:38px;color:#0000ff;font-size:18px;white-space:nowrap">导入</div>
<svg class="a" style="left:931px;top:143px;width:24px;height:24px;"><use href="#i-export"/></svg>
<div class="a" style="left:963px;top:136px;height:38px;padding-top:1px;line-height:38px;color:#0000ff;font-size:18px;white-space:nowrap">导出</div>
<svg class="a" style="left:1009px;top:151px;width:13px;height:8px;"><use href="#i-caret"/></svg>
<svg class="a" style="left:1043px;top:143px;width:26px;height:24px;"><use href="#i-print"/></svg>
<div class="a" style="left:1074px;top:136px;height:38px;padding-top:1px;line-height:38px;color:#0000ff;font-size:18px;white-space:nowrap">打印选中</div>
<svg class="a" style="left:1158px;top:151px;width:13px;height:8px;"><use href="#i-caret"/></svg>
<svg class="a" style="left:1192px;top:144px;width:22px;height:22px;"><use href="#i-search"/></svg>
<div class="a" style="left:1221px;top:136px;height:38px;padding-top:1px;line-height:38px;color:#0000ff;font-size:18px;white-space:nowrap">查询</div>
<svg class="a" style="left:1268px;top:151px;width:13px;height:8px;"><use href="#i-caret"/></svg>
<svg class="a" style="left:1301px;top:142px;width:26px;height:26px;"><use href="#i-exit"/></svg>
<div class="a" style="left:1332px;top:136px;height:38px;padding-top:1px;line-height:38px;color:#0000ff;font-size:18px;white-space:nowrap">退出</div>
<div class="a" style="left:556px;top:185px;height:38px;padding-top:1px;line-height:38px;color:#222;font-size:18px;white-space:nowrap">档案编号</div>
<div class="a" style="left:710px;top:187px;width:320px;height:35px;border:1px solid #afc43e;background:#fff"></div>
<div class="a" style="left:1033px;top:185px;height:38px;padding-top:1px;line-height:38px;color:#222;font-size:18px;white-space:nowrap">档案字号</div>
<div class="a" style="left:1187px;top:187px;width:320px;height:35px;border:1px solid #afc43e;background:#fff"></div>
<div class="a" style="left:1510px;top:185px;height:38px;padding-top:1px;line-height:38px;color:#222;font-size:18px;white-space:nowrap">档案名称</div>
<div class="a" style="left:1664px;top:187px;width:320px;height:35px;border:1px solid #afc43e;background:#fff"></div>
<div class="a" style="left:1987px;top:185px;height:38px;padding-top:1px;line-height:38px;color:#222;font-size:18px;white-space:nowrap">档案类别</div>
<div class="a" style="left:2141px;top:187px;width:320px;height:35px;border:1px solid #afc43e;background:#fff"></div>
<div class="a" style="left:2423px;top:188px;width:37px;height:33px;background:#eef3de"></div>
<svg class="a" style="left:2432px;top:199px;width:16px;height:10px;"><use href="#i-chev"/></svg>
<div class="a" style="left:544px;top:234px;width:1966px;height:38px;background:linear-gradient(#fafafa,#ededed);border-top:1px solid #dcdcdc;border-bottom:1px solid #dcdcdc"></div>
<div class="a" style="left:544px;top:272px;width:1943px;height:609px;background:#f9f9f9"></div>
<div class="a" style="left:544px;top:235px;width:44px;height:36px;background:linear-gradient(#fafafa,#ededed)"></div>
<div class="a" style="left:544px;top:271.5px;width:44px;height:37.5px;background:linear-gradient(#f9f9f9,#ececec)"></div>
<div class="a" style="left:544px;top:308.5px;width:44px;height:0;border-top:1px dotted #d6d6d6"></div>
<div class="a" style="left:544px;top:309.0px;width:44px;height:37.5px;background:linear-gradient(#f9f9f9,#ececec)"></div>
<div class="a" style="left:544px;top:346.0px;width:44px;height:0;border-top:1px dotted #d6d6d6"></div>
<div class="a" style="left:544px;top:346.5px;width:44px;height:37.5px;background:linear-gradient(#f9f9f9,#ececec)"></div>
<div class="a" style="left:544px;top:383.5px;width:44px;height:0;border-top:1px dotted #d6d6d6"></div>
<div class="a" style="left:544px;top:384.0px;width:44px;height:37.5px;background:linear-gradient(#f9f9f9,#ececec)"></div>
<div class="a" style="left:544px;top:421.0px;width:44px;height:0;border-top:1px dotted #d6d6d6"></div>
<div class="a" style="left:544px;top:421.5px;width:44px;height:37.5px;background:linear-gradient(#f9f9f9,#ececec)"></div>
<div class="a" style="left:544px;top:458.5px;width:44px;height:0;border-top:1px dotted #d6d6d6"></div>
<div class="a" style="left:544px;top:459.0px;width:44px;height:37.5px;background:linear-gradient(#f9f9f9,#ececec)"></div>
<div class="a" style="left:544px;top:496.0px;width:44px;height:0;border-top:1px dotted #d6d6d6"></div>
<div class="a" style="left:544px;top:496.5px;width:44px;height:37.5px;background:linear-gradient(#f9f9f9,#ececec)"></div>
<div class="a" style="left:544px;top:533.5px;width:44px;height:0;border-top:1px dotted #d6d6d6"></div>
<div class="a" style="left:544px;top:534.0px;width:44px;height:37.5px;background:linear-gradient(#f9f9f9,#ececec)"></div>
<div class="a" style="left:544px;top:571.0px;width:44px;height:0;border-top:1px dotted #d6d6d6"></div>
<div class="a" style="left:544px;top:571.5px;width:44px;height:37.5px;background:linear-gradient(#f9f9f9,#ececec)"></div>
<div class="a" style="left:544px;top:608.5px;width:44px;height:0;border-top:1px dotted #d6d6d6"></div>
<div class="a" style="left:544px;top:609.0px;width:44px;height:37.5px;background:linear-gradient(#f9f9f9,#ececec)"></div>
<div class="a" style="left:544px;top:646.0px;width:44px;height:0;border-top:1px dotted #d6d6d6"></div>
<div class="a" style="left:544px;top:646.5px;width:44px;height:37.5px;background:linear-gradient(#f9f9f9,#ececec)"></div>
<div class="a" style="left:544px;top:683.5px;width:44px;height:0;border-top:1px dotted #d6d6d6"></div>
<div class="a" style="left:544px;top:684.0px;width:44px;height:37.5px;background:linear-gradient(#f9f9f9,#ececec)"></div>
<div class="a" style="left:544px;top:721.0px;width:44px;height:0;border-top:1px dotted #d6d6d6"></div>
<div class="a" style="left:544px;top:721.5px;width:44px;height:37.5px;background:linear-gradient(#f9f9f9,#ececec)"></div>
<div class="a" style="left:544px;top:758.5px;width:44px;height:0;border-top:1px dotted #d6d6d6"></div>
<div class="a" style="left:544px;top:759.0px;width:44px;height:37.5px;background:linear-gradient(#f9f9f9,#ececec)"></div>
<div class="a" style="left:544px;top:796.0px;width:44px;height:0;border-top:1px dotted #d6d6d6"></div>
<div class="a" style="left:544px;top:796.5px;width:44px;height:37.5px;background:linear-gradient(#f9f9f9,#ececec)"></div>
<div class="a" style="left:544px;top:833.5px;width:44px;height:0;border-top:1px dotted #d6d6d6"></div>
<div class="a" style="left:544px;top:834.0px;width:44px;height:37.5px;background:linear-gradient(#f9f9f9,#ececec)"></div>
<div class="a" style="left:544px;top:871.0px;width:44px;height:0;border-top:1px dotted #d6d6d6"></div>
<div class="a" style="left:544px;top:871.5px;width:44px;height:34.0px;background:linear-gradient(#f9f9f9,#ececec)"></div>
<div class="a" style="left:588px;top:309px;width:1899px;height:38px;background:#c6d47b"></div>
<div class="a" style="left:588px;top:309px;width:1899px;height:0px;border-top:1px dotted #d6d6d6"></div>
<div class="a" style="left:588px;top:347px;width:1899px;height:0px;border-top:1px dotted #d6d6d6"></div>
<div class="a" style="left:588px;top:385px;width:1899px;height:0px;border-top:1px dotted #d6d6d6"></div>
<div class="a" style="left:588px;top:423px;width:1899px;height:0px;border-top:1px dotted #d6d6d6"></div>
<div class="a" style="left:588px;top:461px;width:1899px;height:0px;border-top:1px dotted #d6d6d6"></div>
<div class="a" style="left:588px;top:499px;width:1899px;height:0px;border-top:1px dotted #d6d6d6"></div>
<div class="a" style="left:588px;top:537px;width:1899px;height:0px;border-top:1px dotted #d6d6d6"></div>
<div class="a" style="left:588px;top:575px;width:1899px;height:0px;border-top:1px dotted #d6d6d6"></div>
<div class="a" style="left:588px;top:613px;width:1899px;height:0px;border-top:1px dotted #d6d6d6"></div>
<div class="a" style="left:588px;top:651px;width:1899px;height:0px;border-top:1px dotted #d6d6d6"></div>
<div class="a" style="left:588px;top:689px;width:1899px;height:0px;border-top:1px dotted #d6d6d6"></div>
<div class="a" style="left:588px;top:727px;width:1899px;height:0px;border-top:1px dotted #d6d6d6"></div>
<div class="a" style="left:588px;top:765px;width:1899px;height:0px;border-top:1px dotted #d6d6d6"></div>
<div class="a" style="left:588px;top:803px;width:1899px;height:0px;border-top:1px dotted #d6d6d6"></div>
<div class="a" style="left:588px;top:841px;width:1899px;height:0px;border-top:1px dotted #d6d6d6"></div>
<div class="a" style="left:588px;top:879px;width:1899px;height:0px;border-top:1px dotted #d6d6d6"></div>
<div class="a" style="left:588px;top:235px;width:0px;height:36px;border-left:1px dotted #d6d6d6"></div>
<div class="a" style="left:588px;top:272px;width:0px;height:609px;border-left:1px dotted #d6d6d6"></div>
<div class="a" style="left:630px;top:235px;width:0px;height:36px;border-left:1px dotted #d6d6d6"></div>
<div class="a" style="left:630px;top:272px;width:0px;height:609px;border-left:1px dotted #d6d6d6"></div>
<div class="a" style="left:809px;top:235px;width:0px;height:36px;border-left:1px dotted #d6d6d6"></div>
<div class="a" style="left:809px;top:272px;width:0px;height:609px;border-left:1px dotted #d6d6d6"></div>
<div class="a" style="left:888px;top:235px;width:0px;height:36px;border-left:1px dotted #d6d6d6"></div>
<div class="a" style="left:888px;top:272px;width:0px;height:609px;border-left:1px dotted #d6d6d6"></div>
<div class="a" style="left:1005px;top:235px;width:0px;height:36px;border-left:1px dotted #d6d6d6"></div>
<div class="a" style="left:1005px;top:272px;width:0px;height:609px;border-left:1px dotted #d6d6d6"></div>
<div class="a" style="left:1124px;top:235px;width:0px;height:36px;border-left:1px dotted #d6d6d6"></div>
<div class="a" style="left:1124px;top:272px;width:0px;height:609px;border-left:1px dotted #d6d6d6"></div>
<div class="a" style="left:1277px;top:235px;width:0px;height:36px;border-left:1px dotted #d6d6d6"></div>
<div class="a" style="left:1277px;top:272px;width:0px;height:609px;border-left:1px dotted #d6d6d6"></div>
<div class="a" style="left:1396px;top:235px;width:0px;height:36px;border-left:1px dotted #d6d6d6"></div>
<div class="a" style="left:1396px;top:272px;width:0px;height:609px;border-left:1px dotted #d6d6d6"></div>
<div class="a" style="left:1597px;top:235px;width:0px;height:36px;border-left:1px dotted #d6d6d6"></div>
<div class="a" style="left:1597px;top:272px;width:0px;height:609px;border-left:1px dotted #d6d6d6"></div>
<div class="a" style="left:1874px;top:235px;width:0px;height:36px;border-left:1px dotted #d6d6d6"></div>
<div class="a" style="left:1874px;top:272px;width:0px;height:609px;border-left:1px dotted #d6d6d6"></div>
<div class="a" style="left:2023px;top:235px;width:0px;height:36px;border-left:1px dotted #d6d6d6"></div>
<div class="a" style="left:2023px;top:272px;width:0px;height:609px;border-left:1px dotted #d6d6d6"></div>
<div class="a" style="left:2143px;top:235px;width:0px;height:36px;border-left:1px dotted #d6d6d6"></div>
<div class="a" style="left:2143px;top:272px;width:0px;height:609px;border-left:1px dotted #d6d6d6"></div>
<div class="a" style="left:2243px;top:235px;width:0px;height:36px;border-left:1px dotted #d6d6d6"></div>
<div class="a" style="left:2243px;top:272px;width:0px;height:609px;border-left:1px dotted #d6d6d6"></div>
<div class="a" style="left:2343px;top:235px;width:0px;height:36px;border-left:1px dotted #d6d6d6"></div>
<div class="a" style="left:2343px;top:272px;width:0px;height:609px;border-left:1px dotted #d6d6d6"></div>
<div class="a" style="left:2441px;top:235px;width:0px;height:36px;border-left:1px dotted #d6d6d6"></div>
<div class="a" style="left:2441px;top:272px;width:0px;height:609px;border-left:1px dotted #d6d6d6"></div>
<div class="a" style="left:630px;top:234px;width:179px;height:38px;padding-top:1px;line-height:38px;text-align:center;font-size:18px;color:#333;white-space:nowrap">操作</div>
<div class="a" style="left:809px;top:234px;width:79px;height:38px;padding-top:1px;line-height:38px;text-align:center;font-size:18px;color:#333;white-space:nowrap"><i class="l">ID</i><svg style="width:12px;height:16px;margin-left:6px;vertical-align:-2px"><use href="#i-sort"/></svg></div>
<div class="a" style="left:888px;top:234px;width:117px;height:38px;padding-top:1px;line-height:38px;text-align:center;font-size:18px;color:#333;white-space:nowrap">分组</div>
<div class="a" style="left:1005px;top:234px;width:119px;height:38px;padding-top:1px;line-height:38px;text-align:center;font-size:18px;color:#333;white-space:nowrap">登记日期</div>
<div class="a" style="left:1124px;top:234px;width:153px;height:38px;padding-top:1px;line-height:38px;text-align:center;font-size:18px;color:#333;white-space:nowrap">档案编号<svg style="width:12px;height:16px;margin-left:6px;vertical-align:-2px"><use href="#i-sort"/></svg></div>
<div class="a" style="left:1277px;top:234px;width:119px;height:38px;padding-top:1px;line-height:38px;text-align:center;font-size:18px;color:#333;white-space:nowrap">条形码</div>
<div class="a" style="left:1396px;top:234px;width:201px;height:38px;padding-top:1px;line-height:38px;text-align:center;font-size:18px;color:#333;white-space:nowrap">档案字号<svg style="width:12px;height:16px;margin-left:6px;vertical-align:-2px"><use href="#i-sort"/></svg></div>
<div class="a" style="left:1597px;top:234px;width:277px;height:38px;padding-top:1px;line-height:38px;text-align:center;font-size:18px;color:#333;white-space:nowrap">档案名称<svg style="width:12px;height:16px;margin-left:6px;vertical-align:-2px"><use href="#i-sort"/></svg></div>
<div class="a" style="left:1874px;top:234px;width:149px;height:38px;padding-top:1px;line-height:38px;text-align:center;font-size:18px;color:#333;white-space:nowrap">档案类别<svg style="width:12px;height:16px;margin-left:6px;vertical-align:-2px"><use href="#i-sort"/></svg></div>
<div class="a" style="left:2023px;top:234px;width:120px;height:38px;padding-top:1px;line-height:38px;text-align:center;font-size:18px;color:#333;white-space:nowrap">所属部门</div>
<div class="a" style="left:2143px;top:234px;width:100px;height:38px;padding-top:1px;line-height:38px;text-align:center;font-size:18px;color:#333;white-space:nowrap">保密等级<svg style="width:12px;height:16px;margin-left:6px;vertical-align:-2px"><use href="#i-sort"/></svg></div>
<div class="a" style="left:2243px;top:234px;width:100px;height:38px;padding-top:1px;line-height:38px;text-align:center;font-size:18px;color:#333;white-space:nowrap">份数</div>
<div class="a" style="left:2343px;top:234px;width:98px;height:38px;padding-top:1px;line-height:38px;text-align:center;font-size:18px;color:#333;white-space:nowrap">页数</div>
<div class="a" style="left:2455px;top:234px;width:55px;height:38px;padding-top:1px;line-height:38px;font-size:18px;color:#333;white-space:nowrap;overflow:hidden">开始日</div>
<div class="ck" style="left:598px;top:241px"></div>
<div class="a" style="left:544px;top:271.5px;width:44px;height:37.5px;line-height:37.5px;text-align:center;font-size:18px;color:#333"><i class="l">1</i></div>
<div class="ck" style="left:598px;top:279px"></div>
<svg class="a" style="left:688px;top:274px;width:26px;height:26px;background:#fff"><use href="#i-edit"/></svg>
<div class="a" style="left:719px;top:288px;width:2px;height:17px;background:#444"></div>
<svg class="a" style="left:726px;top:271px;width:26px;height:30px;background:#fff"><use href="#i-del"/></svg>
<div class="a" style="left:816px;top:271px;width:72px;height:38px;padding-top:1px;line-height:38px;font-size:18px;color:#333;white-space:nowrap;overflow:hidden"><i class="l">42</i></div>
<div class="a" style="left:1012px;top:271px;width:112px;height:38px;padding-top:1px;line-height:38px;font-size:18px;color:#333;white-space:nowrap;overflow:hidden"><i class="l">2026-02-12</i></div>
<div class="a" style="left:1131px;top:271px;width:146px;height:38px;padding-top:1px;line-height:38px;font-size:18px;color:#333;white-space:nowrap;overflow:hidden"><i class="l">DA2026021200123</i></div>
<div class="a" style="left:1604px;top:271px;width:270px;height:38px;padding-top:1px;line-height:38px;font-size:18px;color:#333;white-space:nowrap;overflow:hidden"><i class="l">2133</i></div>
<div class="a" style="left:2250px;top:271px;width:93px;height:38px;padding-top:1px;line-height:38px;font-size:18px;color:#333;white-space:nowrap;overflow:hidden"><i class="l">0</i></div>
<div class="a" style="left:2350px;top:271px;width:91px;height:38px;padding-top:1px;line-height:38px;font-size:18px;color:#333;white-space:nowrap;overflow:hidden"><i class="l">0</i></div>
<div class="a" style="left:544px;top:309.0px;width:44px;height:37.5px;line-height:37.5px;text-align:center;font-size:18px;color:#333"><i class="l">2</i></div>
<div class="ck" style="left:598px;top:317px"></div>
<svg class="a" style="left:688px;top:312px;width:26px;height:26px;background:#fff"><use href="#i-edit"/></svg>
<div class="a" style="left:719px;top:326px;width:2px;height:17px;background:#444"></div>
<svg class="a" style="left:726px;top:309px;width:26px;height:30px;background:#fff"><use href="#i-del"/></svg>
<div class="a" style="left:816px;top:309px;width:72px;height:38px;padding-top:1px;line-height:38px;font-size:18px;color:#333;white-space:nowrap;overflow:hidden"><i class="l">41</i></div>
<div class="a" style="left:895px;top:309px;width:110px;height:38px;padding-top:1px;line-height:38px;font-size:18px;color:#333;white-space:nowrap;overflow:hidden">行政资料</div>
<div class="a" style="left:1012px;top:309px;width:112px;height:38px;padding-top:1px;line-height:38px;font-size:18px;color:#333;white-space:nowrap;overflow:hidden"><i class="l">2020-12-18</i></div>
<div class="a" style="left:1131px;top:309px;width:146px;height:38px;padding-top:1px;line-height:38px;font-size:18px;color:#333;white-space:nowrap;overflow:hidden"><i class="l">DA000034</i></div>
<div class="a" style="left:1284px;top:309px;width:112px;height:38px;padding-top:1px;line-height:38px;font-size:18px;color:#333;white-space:nowrap;overflow:hidden"><i class="l">100010</i></div>
<div class="a" style="left:1403px;top:309px;width:194px;height:38px;padding-top:1px;line-height:38px;font-size:18px;color:#333;white-space:nowrap;overflow:hidden"><i class="l">2016-001</i></div>
<div class="a" style="left:1604px;top:309px;width:270px;height:38px;padding-top:1px;line-height:38px;font-size:18px;color:#333;white-space:nowrap;overflow:hidden"><i class="l">2015</i>年财务年报</div>
<div class="a" style="left:1881px;top:309px;width:142px;height:38px;padding-top:1px;line-height:38px;font-size:18px;color:#333;white-space:nowrap;overflow:hidden">合同档案</div>
<div class="a" style="left:2030px;top:309px;width:113px;height:38px;padding-top:1px;line-height:38px;font-size:18px;color:#333;white-space:nowrap;overflow:hidden">行政办</div>
<div class="a" style="left:2150px;top:309px;width:93px;height:38px;padding-top:1px;line-height:38px;font-size:18px;color:#333;white-space:nowrap;overflow:hidden">绝密</div>
<div class="a" style="left:2250px;top:309px;width:93px;height:38px;padding-top:1px;line-height:38px;font-size:18px;color:#333;white-space:nowrap;overflow:hidden"><i class="l">3</i></div>
<div class="a" style="left:2350px;top:309px;width:91px;height:38px;padding-top:1px;line-height:38px;font-size:18px;color:#333;white-space:nowrap;overflow:hidden"><i class="l">4</i></div>
<div class="a" style="left:2448px;top:309px;width:39px;height:38px;padding-top:1px;line-height:38px;font-size:18px;color:#333;white-space:nowrap;overflow:hidden"><i class="l">2016</i></div>
<div class="a" style="left:544px;top:346.5px;width:44px;height:37.5px;line-height:37.5px;text-align:center;font-size:18px;color:#333"><i class="l">3</i></div>
<div class="ck" style="left:598px;top:355px"></div>
<svg class="a" style="left:688px;top:350px;width:26px;height:26px;background:#fff"><use href="#i-edit"/></svg>
<div class="a" style="left:719px;top:364px;width:2px;height:17px;background:#444"></div>
<svg class="a" style="left:726px;top:347px;width:26px;height:30px;background:#fff"><use href="#i-del"/></svg>
<div class="a" style="left:816px;top:347px;width:72px;height:38px;padding-top:1px;line-height:38px;font-size:18px;color:#333;white-space:nowrap;overflow:hidden"><i class="l">40</i></div>
<div class="a" style="left:895px;top:347px;width:110px;height:38px;padding-top:1px;line-height:38px;font-size:18px;color:#333;white-space:nowrap;overflow:hidden">合同档案</div>
<div class="a" style="left:1012px;top:347px;width:112px;height:38px;padding-top:1px;line-height:38px;font-size:18px;color:#333;white-space:nowrap;overflow:hidden"><i class="l">2016-04-08</i></div>
<div class="a" style="left:1131px;top:347px;width:146px;height:38px;padding-top:1px;line-height:38px;font-size:18px;color:#333;white-space:nowrap;overflow:hidden"><i class="l">DA000033</i></div>
<div class="a" style="left:1284px;top:347px;width:112px;height:38px;padding-top:1px;line-height:38px;font-size:18px;color:#333;white-space:nowrap;overflow:hidden"><i class="l">354255</i></div>
<div class="a" style="left:1403px;top:347px;width:194px;height:38px;padding-top:1px;line-height:38px;font-size:18px;color:#333;white-space:nowrap;overflow:hidden"><i class="l">2015-002</i></div>
<div class="a" style="left:1604px;top:347px;width:270px;height:38px;padding-top:1px;line-height:38px;font-size:18px;color:#333;white-space:nowrap;overflow:hidden">赵云档案</div>
<div class="a" style="left:1881px;top:347px;width:142px;height:38px;padding-top:1px;line-height:38px;font-size:18px;color:#333;white-space:nowrap;overflow:hidden">合同档案</div>
<div class="a" style="left:2030px;top:347px;width:113px;height:38px;padding-top:1px;line-height:38px;font-size:18px;color:#333;white-space:nowrap;overflow:hidden">商务一部</div>
<div class="a" style="left:2150px;top:347px;width:93px;height:38px;padding-top:1px;line-height:38px;font-size:18px;color:#333;white-space:nowrap;overflow:hidden">普通</div>
<div class="a" style="left:2250px;top:347px;width:93px;height:38px;padding-top:1px;line-height:38px;font-size:18px;color:#333;white-space:nowrap;overflow:hidden"><i class="l">0</i></div>
<div class="a" style="left:2350px;top:347px;width:91px;height:38px;padding-top:1px;line-height:38px;font-size:18px;color:#333;white-space:nowrap;overflow:hidden"><i class="l">0</i></div>
<div class="a" style="left:2448px;top:347px;width:39px;height:38px;padding-top:1px;line-height:38px;font-size:18px;color:#333;white-space:nowrap;overflow:hidden"><i class="l">2016</i></div>
<div class="a" style="left:544px;top:384.0px;width:44px;height:37.5px;line-height:37.5px;text-align:center;font-size:18px;color:#333"><i class="l">4</i></div>
<div class="ck" style="left:598px;top:393px"></div>
<svg class="a" style="left:688px;top:388px;width:26px;height:26px;background:#fff"><use href="#i-edit"/></svg>
<div class="a" style="left:719px;top:402px;width:2px;height:17px;background:#444"></div>
<svg class="a" style="left:726px;top:385px;width:26px;height:30px;background:#fff"><use href="#i-del"/></svg>
<div class="a" style="left:816px;top:385px;width:72px;height:38px;padding-top:1px;line-height:38px;font-size:18px;color:#333;white-space:nowrap;overflow:hidden"><i class="l">39</i></div>
<div class="a" style="left:895px;top:385px;width:110px;height:38px;padding-top:1px;line-height:38px;font-size:18px;color:#333;white-space:nowrap;overflow:hidden">合同档案</div>
<div class="a" style="left:1012px;top:385px;width:112px;height:38px;padding-top:1px;line-height:38px;font-size:18px;color:#333;white-space:nowrap;overflow:hidden"><i class="l">2016-11-12</i></div>
<div class="a" style="left:1131px;top:385px;width:146px;height:38px;padding-top:1px;line-height:38px;font-size:18px;color:#333;white-space:nowrap;overflow:hidden"><i class="l">DA000032</i></div>
<div class="a" style="left:1284px;top:385px;width:112px;height:38px;padding-top:1px;line-height:38px;font-size:18px;color:#333;white-space:nowrap;overflow:hidden"><i class="l">1111</i></div>
<div class="a" style="left:1403px;top:385px;width:194px;height:38px;padding-top:1px;line-height:38px;font-size:18px;color:#333;white-space:nowrap;overflow:hidden">穗政字（<i class="l">2013</i>）<i class="l">01</i>号</div>
<div class="a" style="left:1604px;top:385px;width:270px;height:38px;padding-top:1px;line-height:38px;font-size:18px;color:#333;white-space:nowrap;overflow:hidden">关平档案资料</div>
<div class="a" style="left:1881px;top:385px;width:142px;height:38px;padding-top:1px;line-height:38px;font-size:18px;color:#333;white-space:nowrap;overflow:hidden">合同档案</div>
<div class="a" style="left:2030px;top:385px;width:113px;height:38px;padding-top:1px;line-height:38px;font-size:18px;color:#333;white-space:nowrap;overflow:hidden">工程部</div>
<div class="a" style="left:2250px;top:385px;width:93px;height:38px;padding-top:1px;line-height:38px;font-size:18px;color:#333;white-space:nowrap;overflow:hidden"><i class="l">0</i></div>
<div class="a" style="left:2350px;top:385px;width:91px;height:38px;padding-top:1px;line-height:38px;font-size:18px;color:#333;white-space:nowrap;overflow:hidden"><i class="l">0</i></div>
<div class="a" style="left:2448px;top:385px;width:39px;height:38px;padding-top:1px;line-height:38px;font-size:18px;color:#333;white-space:nowrap;overflow:hidden"><i class="l">2016</i></div>
<div class="a" style="left:544px;top:421.5px;width:44px;height:37.5px;line-height:37.5px;text-align:center;font-size:18px;color:#333"><i class="l">5</i></div>
<div class="ck" style="left:598px;top:431px"></div>
<svg class="a" style="left:688px;top:426px;width:26px;height:26px;background:#fff"><use href="#i-edit"/></svg>
<div class="a" style="left:719px;top:440px;width:2px;height:17px;background:#444"></div>
<svg class="a" style="left:726px;top:423px;width:26px;height:30px;background:#fff"><use href="#i-del"/></svg>
<div class="a" style="left:816px;top:423px;width:72px;height:38px;padding-top:1px;line-height:38px;font-size:18px;color:#333;white-space:nowrap;overflow:hidden"><i class="l">38</i></div>
<div class="a" style="left:895px;top:423px;width:110px;height:38px;padding-top:1px;line-height:38px;font-size:18px;color:#333;white-space:nowrap;overflow:hidden">合同档案</div>
<div class="a" style="left:1012px;top:423px;width:112px;height:38px;padding-top:1px;line-height:38px;font-size:18px;color:#333;white-space:nowrap;overflow:hidden"><i class="l">2018-11-17</i></div>
<div class="a" style="left:1131px;top:423px;width:146px;height:38px;padding-top:1px;line-height:38px;font-size:18px;color:#333;white-space:nowrap;overflow:hidden"><i class="l">DA000031</i></div>
<div class="a" style="left:1604px;top:423px;width:270px;height:38px;padding-top:1px;line-height:38px;font-size:18px;color:#333;white-space:nowrap;overflow:hidden">刘璋档案资料</div>
<div class="a" style="left:1881px;top:423px;width:142px;height:38px;padding-top:1px;line-height:38px;font-size:18px;color:#333;white-space:nowrap;overflow:hidden">合同档案</div>
<div class="a" style="left:2250px;top:423px;width:93px;height:38px;padding-top:1px;line-height:38px;font-size:18px;color:#333;white-space:nowrap;overflow:hidden"><i class="l">0</i></div>
<div class="a" style="left:2350px;top:423px;width:91px;height:38px;padding-top:1px;line-height:38px;font-size:18px;color:#333;white-space:nowrap;overflow:hidden"><i class="l">0</i></div>
<div class="a" style="left:2448px;top:423px;width:39px;height:38px;padding-top:1px;line-height:38px;font-size:18px;color:#333;white-space:nowrap;overflow:hidden"><i class="l">2016</i></div>
<div class="a" style="left:544px;top:459.0px;width:44px;height:37.5px;line-height:37.5px;text-align:center;font-size:18px;color:#333"><i class="l">6</i></div>
<div class="ck" style="left:598px;top:469px"></div>
<svg class="a" style="left:688px;top:464px;width:26px;height:26px;background:#fff"><use href="#i-edit"/></svg>
<div class="a" style="left:719px;top:478px;width:2px;height:17px;background:#444"></div>
<svg class="a" style="left:726px;top:461px;width:26px;height:30px;background:#fff"><use href="#i-del"/></svg>
<div class="a" style="left:816px;top:461px;width:72px;height:38px;padding-top:1px;line-height:38px;font-size:18px;color:#333;white-space:nowrap;overflow:hidden"><i class="l">37</i></div>
<div class="a" style="left:895px;top:461px;width:110px;height:38px;padding-top:1px;line-height:38px;font-size:18px;color:#333;white-space:nowrap;overflow:hidden">行政资料</div>
<div class="a" style="left:1012px;top:461px;width:112px;height:38px;padding-top:1px;line-height:38px;font-size:18px;color:#333;white-space:nowrap;overflow:hidden"><i class="l">2018-11-17</i></div>
<div class="a" style="left:1131px;top:461px;width:146px;height:38px;padding-top:1px;line-height:38px;font-size:18px;color:#333;white-space:nowrap;overflow:hidden"><i class="l">DA000030</i></div>
<div class="a" style="left:1604px;top:461px;width:270px;height:38px;padding-top:1px;line-height:38px;font-size:18px;color:#333;white-space:nowrap;overflow:hidden">孙坚档案</div>
<div class="a" style="left:1881px;top:461px;width:142px;height:38px;padding-top:1px;line-height:38px;font-size:18px;color:#333;white-space:nowrap;overflow:hidden">合同档案</div>
<div class="a" style="left:2150px;top:461px;width:93px;height:38px;padding-top:1px;line-height:38px;font-size:18px;color:#333;white-space:nowrap;overflow:hidden">普通</div>
<div class="a" style="left:2250px;top:461px;width:93px;height:38px;padding-top:1px;line-height:38px;font-size:18px;color:#333;white-space:nowrap;overflow:hidden"><i class="l">0</i></div>
<div class="a" style="left:2350px;top:461px;width:91px;height:38px;padding-top:1px;line-height:38px;font-size:18px;color:#333;white-space:nowrap;overflow:hidden"><i class="l">0</i></div>
<div class="a" style="left:2448px;top:461px;width:39px;height:38px;padding-top:1px;line-height:38px;font-size:18px;color:#333;white-space:nowrap;overflow:hidden"><i class="l">2016</i></div>
<div class="a" style="left:544px;top:496.5px;width:44px;height:37.5px;line-height:37.5px;text-align:center;font-size:18px;color:#333"><i class="l">7</i></div>
<div class="ck" style="left:598px;top:507px"></div>
<svg class="a" style="left:688px;top:502px;width:26px;height:26px;background:#fff"><use href="#i-edit"/></svg>
<div class="a" style="left:719px;top:516px;width:2px;height:17px;background:#444"></div>
<svg class="a" style="left:726px;top:499px;width:26px;height:30px;background:#fff"><use href="#i-del"/></svg>
<div class="a" style="left:816px;top:499px;width:72px;height:38px;padding-top:1px;line-height:38px;font-size:18px;color:#333;white-space:nowrap;overflow:hidden"><i class="l">36</i></div>
<div class="a" style="left:895px;top:499px;width:110px;height:38px;padding-top:1px;line-height:38px;font-size:18px;color:#333;white-space:nowrap;overflow:hidden">人事档案</div>
<div class="a" style="left:1012px;top:499px;width:112px;height:38px;padding-top:1px;line-height:38px;font-size:18px;color:#333;white-space:nowrap;overflow:hidden"><i class="l">2018-12-17</i></div>
<div class="a" style="left:1131px;top:499px;width:146px;height:38px;padding-top:1px;line-height:38px;font-size:18px;color:#333;white-space:nowrap;overflow:hidden"><i class="l">DA000029</i></div>
<div class="a" style="left:1604px;top:499px;width:270px;height:38px;padding-top:1px;line-height:38px;font-size:18px;color:#333;white-space:nowrap;overflow:hidden">曹操档案资料</div>
<div class="a" style="left:1881px;top:499px;width:142px;height:38px;padding-top:1px;line-height:38px;font-size:18px;color:#333;white-space:nowrap;overflow:hidden">合同档案</div>
<div class="a" style="left:2030px;top:499px;width:113px;height:38px;padding-top:1px;line-height:38px;font-size:18px;color:#333;white-space:nowrap;overflow:hidden">行政办</div>
<div class="a" style="left:2150px;top:499px;width:93px;height:38px;padding-top:1px;line-height:38px;font-size:18px;color:#333;white-space:nowrap;overflow:hidden">绝密</div>
<div class="a" style="left:2250px;top:499px;width:93px;height:38px;padding-top:1px;line-height:38px;font-size:18px;color:#333;white-space:nowrap;overflow:hidden"><i class="l">0</i></div>
<div class="a" style="left:2350px;top:499px;width:91px;height:38px;padding-top:1px;line-height:38px;font-size:18px;color:#333;white-space:nowrap;overflow:hidden"><i class="l">0</i></div>
<div class="a" style="left:2448px;top:499px;width:39px;height:38px;padding-top:1px;line-height:38px;font-size:18px;color:#333;white-space:nowrap;overflow:hidden"><i class="l">2016</i></div>
<div class="a" style="left:544px;top:534.0px;width:44px;height:37.5px;line-height:37.5px;text-align:center;font-size:18px;color:#333"><i class="l">8</i></div>
<div class="ck" style="left:598px;top:545px"></div>
<svg class="a" style="left:688px;top:540px;width:26px;height:26px;background:#fff"><use href="#i-edit"/></svg>
<div class="a" style="left:719px;top:554px;width:2px;height:17px;background:#444"></div>
<svg class="a" style="left:726px;top:537px;width:26px;height:30px;background:#fff"><use href="#i-del"/></svg>
<div class="a" style="left:816px;top:537px;width:72px;height:38px;padding-top:1px;line-height:38px;font-size:18px;color:#333;white-space:nowrap;overflow:hidden"><i class="l">35</i></div>
<div class="a" style="left:895px;top:537px;width:110px;height:38px;padding-top:1px;line-height:38px;font-size:18px;color:#333;white-space:nowrap;overflow:hidden">公司规章制度文件</div>
<div class="a" style="left:1012px;top:537px;width:112px;height:38px;padding-top:1px;line-height:38px;font-size:18px;color:#333;white-space:nowrap;overflow:hidden"><i class="l">2018-12-17</i></div>
<div class="a" style="left:1131px;top:537px;width:146px;height:38px;padding-top:1px;line-height:38px;font-size:18px;color:#333;white-space:nowrap;overflow:hidden"><i class="l">DA000028</i></div>
<div class="a" style="left:1604px;top:537px;width:270px;height:38px;padding-top:1px;line-height:38px;font-size:18px;color:#333;white-space:nowrap;overflow:hidden">迟到处罚规则</div>
<div class="a" style="left:1881px;top:537px;width:142px;height:38px;padding-top:1px;line-height:38px;font-size:18px;color:#333;white-space:nowrap;overflow:hidden">合同档案</div>
<div class="a" style="left:2030px;top:537px;width:113px;height:38px;padding-top:1px;line-height:38px;font-size:18px;color:#333;white-space:nowrap;overflow:hidden">行政办</div>
<div class="a" style="left:2250px;top:537px;width:93px;height:38px;padding-top:1px;line-height:38px;font-size:18px;color:#333;white-space:nowrap;overflow:hidden"><i class="l">0</i></div>
<div class="a" style="left:2350px;top:537px;width:91px;height:38px;padding-top:1px;line-height:38px;font-size:18px;color:#333;white-space:nowrap;overflow:hidden"><i class="l">0</i></div>
<div class="a" style="left:2448px;top:537px;width:39px;height:38px;padding-top:1px;line-height:38px;font-size:18px;color:#333;white-space:nowrap;overflow:hidden"><i class="l">2016</i></div>
<div class="a" style="left:544px;top:571.5px;width:44px;height:37.5px;line-height:37.5px;text-align:center;font-size:18px;color:#333"><i class="l">9</i></div>
<div class="ck" style="left:598px;top:583px"></div>
<svg class="a" style="left:688px;top:578px;width:26px;height:26px;background:#fff"><use href="#i-edit"/></svg>
<div class="a" style="left:719px;top:592px;width:2px;height:17px;background:#444"></div>
<svg class="a" style="left:726px;top:575px;width:26px;height:30px;background:#fff"><use href="#i-del"/></svg>
<div class="a" style="left:816px;top:575px;width:72px;height:38px;padding-top:1px;line-height:38px;font-size:18px;color:#333;white-space:nowrap;overflow:hidden"><i class="l">34</i></div>
<div class="a" style="left:895px;top:575px;width:110px;height:38px;padding-top:1px;line-height:38px;font-size:18px;color:#333;white-space:nowrap;overflow:hidden">合同档案</div>
<div class="a" style="left:1012px;top:575px;width:112px;height:38px;padding-top:1px;line-height:38px;font-size:18px;color:#333;white-space:nowrap;overflow:hidden"><i class="l">2018-12-19</i></div>
<div class="a" style="left:1131px;top:575px;width:146px;height:38px;padding-top:1px;line-height:38px;font-size:18px;color:#333;white-space:nowrap;overflow:hidden"><i class="l">DA000027</i></div>
<div class="a" style="left:1604px;top:575px;width:270px;height:38px;padding-top:1px;line-height:38px;font-size:18px;color:#333;white-space:nowrap;overflow:hidden">诸葛恪档案</div>
<div class="a" style="left:1881px;top:575px;width:142px;height:38px;padding-top:1px;line-height:38px;font-size:18px;color:#333;white-space:nowrap;overflow:hidden">合同档案</div>
<div class="a" style="left:2250px;top:575px;width:93px;height:38px;padding-top:1px;line-height:38px;font-size:18px;color:#333;white-space:nowrap;overflow:hidden"><i class="l">0</i></div>
<div class="a" style="left:2350px;top:575px;width:91px;height:38px;padding-top:1px;line-height:38px;font-size:18px;color:#333;white-space:nowrap;overflow:hidden"><i class="l">0</i></div>
<div class="a" style="left:544px;top:609.0px;width:44px;height:37.5px;line-height:37.5px;text-align:center;font-size:18px;color:#333"><i class="l">10</i></div>
<div class="ck" style="left:598px;top:621px"></div>
<svg class="a" style="left:688px;top:616px;width:26px;height:26px;background:#fff"><use href="#i-edit"/></svg>
<div class="a" style="left:719px;top:630px;width:2px;height:17px;background:#444"></div>
<svg class="a" style="left:726px;top:613px;width:26px;height:30px;background:#fff"><use href="#i-del"/></svg>
<div class="a" style="left:816px;top:613px;width:72px;height:38px;padding-top:1px;line-height:38px;font-size:18px;color:#333;white-space:nowrap;overflow:hidden"><i class="l">33</i></div>
<div class="a" style="left:895px;top:613px;width:110px;height:38px;padding-top:1px;line-height:38px;font-size:18px;color:#333;white-space:nowrap;overflow:hidden">合同档案</div>
<div class="a" style="left:1012px;top:613px;width:112px;height:38px;padding-top:1px;line-height:38px;font-size:18px;color:#333;white-space:nowrap;overflow:hidden"><i class="l">2018-12-19</i></div>
<div class="a" style="left:1131px;top:613px;width:146px;height:38px;padding-top:1px;line-height:38px;font-size:18px;color:#333;white-space:nowrap;overflow:hidden"><i class="l">DA000026</i></div>
<div class="a" style="left:1604px;top:613px;width:270px;height:38px;padding-top:1px;line-height:38px;font-size:18px;color:#333;white-space:nowrap;overflow:hidden"><i class="l">2021</i>年工作报告</div>
<div class="a" style="left:1881px;top:613px;width:142px;height:38px;padding-top:1px;line-height:38px;font-size:18px;color:#333;white-space:nowrap;overflow:hidden">合同档案</div>
<div class="a" style="left:2030px;top:613px;width:113px;height:38px;padding-top:1px;line-height:38px;font-size:18px;color:#333;white-space:nowrap;overflow:hidden">行政办</div>
<div class="a" style="left:2150px;top:613px;width:93px;height:38px;padding-top:1px;line-height:38px;font-size:18px;color:#333;white-space:nowrap;overflow:hidden">秘密</div>
<div class="a" style="left:2250px;top:613px;width:93px;height:38px;padding-top:1px;line-height:38px;font-size:18px;color:#333;white-space:nowrap;overflow:hidden"><i class="l">0</i></div>
<div class="a" style="left:2350px;top:613px;width:91px;height:38px;padding-top:1px;line-height:38px;font-size:18px;color:#333;white-space:nowrap;overflow:hidden"><i class="l">0</i></div>
<div class="a" style="left:544px;top:646.5px;width:44px;height:37.5px;line-height:37.5px;text-align:center;font-size:18px;color:#333"><i class="l">11</i></div>
<div class="ck" style="left:598px;top:659px"></div>
<svg class="a" style="left:688px;top:654px;width:26px;height:26px;background:#fff"><use href="#i-edit"/></svg>
<div class="a" style="left:719px;top:668px;width:2px;height:17px;background:#444"></div>
<svg class="a" style="left:726px;top:651px;width:26px;height:30px;background:#fff"><use href="#i-del"/></svg>
<div class="a" style="left:816px;top:651px;width:72px;height:38px;padding-top:1px;line-height:38px;font-size:18px;color:#333;white-space:nowrap;overflow:hidden"><i class="l">32</i></div>
<div class="a" style="left:895px;top:651px;width:110px;height:38px;padding-top:1px;line-height:38px;font-size:18px;color:#333;white-space:nowrap;overflow:hidden">合同档案</div>
<div class="a" style="left:1012px;top:651px;width:112px;height:38px;padding-top:1px;line-height:38px;font-size:18px;color:#333;white-space:nowrap;overflow:hidden"><i class="l">2018-11-19</i></div>
<div class="a" style="left:1131px;top:651px;width:146px;height:38px;padding-top:1px;line-height:38px;font-size:18px;color:#333;white-space:nowrap;overflow:hidden"><i class="l">DA000025</i></div>
<div class="a" style="left:1604px;top:651px;width:270px;height:38px;padding-top:1px;line-height:38px;font-size:18px;color:#333;white-space:nowrap;overflow:hidden">张飞档案</div>
<div class="a" style="left:1881px;top:651px;width:142px;height:38px;padding-top:1px;line-height:38px;font-size:18px;color:#333;white-space:nowrap;overflow:hidden">合同档案</div>
<div class="a" style="left:2030px;top:651px;width:113px;height:38px;padding-top:1px;line-height:38px;font-size:18px;color:#333;white-space:nowrap;overflow:hidden">财务三部</div>
<div class="a" style="left:2150px;top:651px;width:93px;height:38px;padding-top:1px;line-height:38px;font-size:18px;color:#333;white-space:nowrap;overflow:hidden">秘密</div>
<div class="a" style="left:2250px;top:651px;width:93px;height:38px;padding-top:1px;line-height:38px;font-size:18px;color:#333;white-space:nowrap;overflow:hidden"><i class="l">0</i></div>
<div class="a" style="left:2350px;top:651px;width:91px;height:38px;padding-top:1px;line-height:38px;font-size:18px;color:#333;white-space:nowrap;overflow:hidden"><i class="l">0</i></div>
<div class="a" style="left:2448px;top:651px;width:39px;height:38px;padding-top:1px;line-height:38px;font-size:18px;color:#333;white-space:nowrap;overflow:hidden"><i class="l">2016</i></div>
<div class="a" style="left:544px;top:684.0px;width:44px;height:37.5px;line-height:37.5px;text-align:center;font-size:18px;color:#333"><i class="l">12</i></div>
<div class="ck" style="left:598px;top:697px"></div>
<svg class="a" style="left:688px;top:692px;width:26px;height:26px;background:#fff"><use href="#i-edit"/></svg>
<div class="a" style="left:719px;top:706px;width:2px;height:17px;background:#444"></div>
<svg class="a" style="left:726px;top:689px;width:26px;height:30px;background:#fff"><use href="#i-del"/></svg>
<div class="a" style="left:816px;top:689px;width:72px;height:38px;padding-top:1px;line-height:38px;font-size:18px;color:#333;white-space:nowrap;overflow:hidden"><i class="l">31</i></div>
<div class="a" style="left:895px;top:689px;width:110px;height:38px;padding-top:1px;line-height:38px;font-size:18px;color:#333;white-space:nowrap;overflow:hidden">报表文件</div>
<div class="a" style="left:1012px;top:689px;width:112px;height:38px;padding-top:1px;line-height:38px;font-size:18px;color:#333;white-space:nowrap;overflow:hidden"><i class="l">2016-08-20</i></div>
<div class="a" style="left:1131px;top:689px;width:146px;height:38px;padding-top:1px;line-height:38px;font-size:18px;color:#333;white-space:nowrap;overflow:hidden"><i class="l">DA000024</i></div>
<div class="a" style="left:1403px;top:689px;width:194px;height:38px;padding-top:1px;line-height:38px;font-size:18px;color:#333;white-space:nowrap;overflow:hidden"><i class="l">001</i></div>
<div class="a" style="left:1604px;top:689px;width:270px;height:38px;padding-top:1px;line-height:38px;font-size:18px;color:#333;white-space:nowrap;overflow:hidden"><i class="l">2016</i>年财务报表</div>
<div class="a" style="left:1881px;top:689px;width:142px;height:38px;padding-top:1px;line-height:38px;font-size:18px;color:#333;white-space:nowrap;overflow:hidden">合同档案</div>
<div class="a" style="left:2030px;top:689px;width:113px;height:38px;padding-top:1px;line-height:38px;font-size:18px;color:#333;white-space:nowrap;overflow:hidden">行政办</div>
<div class="a" style="left:2150px;top:689px;width:93px;height:38px;padding-top:1px;line-height:38px;font-size:18px;color:#333;white-space:nowrap;overflow:hidden">绝密</div>
<div class="a" style="left:2250px;top:689px;width:93px;height:38px;padding-top:1px;line-height:38px;font-size:18px;color:#333;white-space:nowrap;overflow:hidden"><i class="l">0</i></div>
<div class="a" style="left:2350px;top:689px;width:91px;height:38px;padding-top:1px;line-height:38px;font-size:18px;color:#333;white-space:nowrap;overflow:hidden"><i class="l">0</i></div>
<div class="a" style="left:2448px;top:689px;width:39px;height:38px;padding-top:1px;line-height:38px;font-size:18px;color:#333;white-space:nowrap;overflow:hidden"><i class="l">2016</i></div>
<div class="a" style="left:544px;top:721.5px;width:44px;height:37.5px;line-height:37.5px;text-align:center;font-size:18px;color:#333"><i class="l">13</i></div>
<div class="ck" style="left:598px;top:735px"></div>
<svg class="a" style="left:688px;top:730px;width:26px;height:26px;background:#fff"><use href="#i-edit"/></svg>
<div class="a" style="left:719px;top:744px;width:2px;height:17px;background:#444"></div>
<svg class="a" style="left:726px;top:727px;width:26px;height:30px;background:#fff"><use href="#i-del"/></svg>
<div class="a" style="left:816px;top:727px;width:72px;height:38px;padding-top:1px;line-height:38px;font-size:18px;color:#333;white-space:nowrap;overflow:hidden"><i class="l">30</i></div>
<div class="a" style="left:895px;top:727px;width:110px;height:38px;padding-top:1px;line-height:38px;font-size:18px;color:#333;white-space:nowrap;overflow:hidden">合同档案</div>
<div class="a" style="left:1012px;top:727px;width:112px;height:38px;padding-top:1px;line-height:38px;font-size:18px;color:#333;white-space:nowrap;overflow:hidden"><i class="l">2016-06-08</i></div>
<div class="a" style="left:1131px;top:727px;width:146px;height:38px;padding-top:1px;line-height:38px;font-size:18px;color:#333;white-space:nowrap;overflow:hidden"><i class="l">DA000023</i></div>
<div class="a" style="left:1403px;top:727px;width:194px;height:38px;padding-top:1px;line-height:38px;font-size:18px;color:#333;white-space:nowrap;overflow:hidden"><i class="l">DA201608300004</i></div>
<div class="a" style="left:1604px;top:727px;width:270px;height:38px;padding-top:1px;line-height:38px;font-size:18px;color:#333;white-space:nowrap;overflow:hidden">吕布档案</div>
<div class="a" style="left:1881px;top:727px;width:142px;height:38px;padding-top:1px;line-height:38px;font-size:18px;color:#333;white-space:nowrap;overflow:hidden">合同档案</div>
<div class="a" style="left:2030px;top:727px;width:113px;height:38px;padding-top:1px;line-height:38px;font-size:18px;color:#333;white-space:nowrap;overflow:hidden">商务一部</div>
<div class="a" style="left:2150px;top:727px;width:93px;height:38px;padding-top:1px;line-height:38px;font-size:18px;color:#333;white-space:nowrap;overflow:hidden">普通</div>
<div class="a" style="left:2250px;top:727px;width:93px;height:38px;padding-top:1px;line-height:38px;font-size:18px;color:#333;white-space:nowrap;overflow:hidden"><i class="l">0</i></div>
<div class="a" style="left:2350px;top:727px;width:91px;height:38px;padding-top:1px;line-height:38px;font-size:18px;color:#333;white-space:nowrap;overflow:hidden"><i class="l">0</i></div>
<div class="a" style="left:2448px;top:727px;width:39px;height:38px;padding-top:1px;line-height:38px;font-size:18px;color:#333;white-space:nowrap;overflow:hidden"><i class="l">2016</i></div>
<div class="a" style="left:544px;top:759.0px;width:44px;height:37.5px;line-height:37.5px;text-align:center;font-size:18px;color:#333"><i class="l">14</i></div>
<div class="ck" style="left:598px;top:773px"></div>
<svg class="a" style="left:688px;top:768px;width:26px;height:26px;background:#fff"><use href="#i-edit"/></svg>
<div class="a" style="left:719px;top:782px;width:2px;height:17px;background:#444"></div>
<svg class="a" style="left:726px;top:765px;width:26px;height:30px;background:#fff"><use href="#i-del"/></svg>
<div class="a" style="left:816px;top:765px;width:72px;height:38px;padding-top:1px;line-height:38px;font-size:18px;color:#333;white-space:nowrap;overflow:hidden"><i class="l">29</i></div>
<div class="a" style="left:895px;top:765px;width:110px;height:38px;padding-top:1px;line-height:38px;font-size:18px;color:#333;white-space:nowrap;overflow:hidden">合同档案</div>
<div class="a" style="left:1012px;top:765px;width:112px;height:38px;padding-top:1px;line-height:38px;font-size:18px;color:#333;white-space:nowrap;overflow:hidden"><i class="l">2016-12-12</i></div>
<div class="a" style="left:1131px;top:765px;width:146px;height:38px;padding-top:1px;line-height:38px;font-size:18px;color:#333;white-space:nowrap;overflow:hidden"><i class="l">DA000022</i></div>
<div class="a" style="left:1403px;top:765px;width:194px;height:38px;padding-top:1px;line-height:38px;font-size:18px;color:#333;white-space:nowrap;overflow:hidden"><i class="l">20160802</i></div>
<div class="a" style="left:1604px;top:765px;width:270px;height:38px;padding-top:1px;line-height:38px;font-size:18px;color:#333;white-space:nowrap;overflow:hidden">张苞档案资料</div>
<div class="a" style="left:1881px;top:765px;width:142px;height:38px;padding-top:1px;line-height:38px;font-size:18px;color:#333;white-space:nowrap;overflow:hidden">合同档案</div>
<div class="a" style="left:2030px;top:765px;width:113px;height:38px;padding-top:1px;line-height:38px;font-size:18px;color:#333;white-space:nowrap;overflow:hidden">财务三部</div>
<div class="a" style="left:2250px;top:765px;width:93px;height:38px;padding-top:1px;line-height:38px;font-size:18px;color:#333;white-space:nowrap;overflow:hidden"><i class="l">0</i></div>
<div class="a" style="left:2350px;top:765px;width:91px;height:38px;padding-top:1px;line-height:38px;font-size:18px;color:#333;white-space:nowrap;overflow:hidden"><i class="l">0</i></div>
<div class="a" style="left:2448px;top:765px;width:39px;height:38px;padding-top:1px;line-height:38px;font-size:18px;color:#333;white-space:nowrap;overflow:hidden"><i class="l">2016</i></div>
<div class="a" style="left:544px;top:796.5px;width:44px;height:37.5px;line-height:37.5px;text-align:center;font-size:18px;color:#333"><i class="l">15</i></div>
<div class="ck" style="left:598px;top:811px"></div>
<svg class="a" style="left:688px;top:806px;width:26px;height:26px;background:#fff"><use href="#i-edit"/></svg>
<div class="a" style="left:719px;top:820px;width:2px;height:17px;background:#444"></div>
<svg class="a" style="left:726px;top:803px;width:26px;height:30px;background:#fff"><use href="#i-del"/></svg>
<div class="a" style="left:816px;top:803px;width:72px;height:38px;padding-top:1px;line-height:38px;font-size:18px;color:#333;white-space:nowrap;overflow:hidden"><i class="l">28</i></div>
<div class="a" style="left:895px;top:803px;width:110px;height:38px;padding-top:1px;line-height:38px;font-size:18px;color:#333;white-space:nowrap;overflow:hidden">合同档案</div>
<div class="a" style="left:1012px;top:803px;width:112px;height:38px;padding-top:1px;line-height:38px;font-size:18px;color:#333;white-space:nowrap;overflow:hidden"><i class="l">2018-11-17</i></div>
<div class="a" style="left:1131px;top:803px;width:146px;height:38px;padding-top:1px;line-height:38px;font-size:18px;color:#333;white-space:nowrap;overflow:hidden"><i class="l">DA000021</i></div>
<div class="a" style="left:1403px;top:803px;width:194px;height:38px;padding-top:1px;line-height:38px;font-size:18px;color:#333;white-space:nowrap;overflow:hidden"><i class="l">20160802</i></div>
<div class="a" style="left:1604px;top:803px;width:270px;height:38px;padding-top:1px;line-height:38px;font-size:18px;color:#333;white-space:nowrap;overflow:hidden">刘备档案资料</div>
<div class="a" style="left:1881px;top:803px;width:142px;height:38px;padding-top:1px;line-height:38px;font-size:18px;color:#333;white-space:nowrap;overflow:hidden">合同档案</div>
<div class="a" style="left:2250px;top:803px;width:93px;height:38px;padding-top:1px;line-height:38px;font-size:18px;color:#333;white-space:nowrap;overflow:hidden"><i class="l">0</i></div>
<div class="a" style="left:2350px;top:803px;width:91px;height:38px;padding-top:1px;line-height:38px;font-size:18px;color:#333;white-space:nowrap;overflow:hidden"><i class="l">0</i></div>
<div class="a" style="left:2448px;top:803px;width:39px;height:38px;padding-top:1px;line-height:38px;font-size:18px;color:#333;white-space:nowrap;overflow:hidden"><i class="l">2016</i></div>
<div class="a" style="left:544px;top:834.0px;width:44px;height:37.5px;line-height:37.5px;text-align:center;font-size:18px;color:#333"><i class="l">16</i></div>
<div class="ck" style="left:598px;top:849px"></div>
<svg class="a" style="left:688px;top:844px;width:26px;height:26px;background:#fff"><use href="#i-edit"/></svg>
<div class="a" style="left:719px;top:858px;width:2px;height:17px;background:#444"></div>
<svg class="a" style="left:726px;top:841px;width:26px;height:30px;background:#fff"><use href="#i-del"/></svg>
<div class="a" style="left:816px;top:841px;width:72px;height:38px;padding-top:1px;line-height:38px;font-size:18px;color:#333;white-space:nowrap;overflow:hidden"><i class="l">27</i></div>
<div class="a" style="left:895px;top:841px;width:110px;height:38px;padding-top:1px;line-height:38px;font-size:18px;color:#333;white-space:nowrap;overflow:hidden">合同档案</div>
<div class="a" style="left:1012px;top:841px;width:112px;height:38px;padding-top:1px;line-height:38px;font-size:18px;color:#333;white-space:nowrap;overflow:hidden"><i class="l">2018-11-17</i></div>
<div class="a" style="left:1131px;top:841px;width:146px;height:38px;padding-top:1px;line-height:38px;font-size:18px;color:#333;white-space:nowrap;overflow:hidden"><i class="l">DA000020</i></div>
<div class="a" style="left:1403px;top:841px;width:194px;height:38px;padding-top:1px;line-height:38px;font-size:18px;color:#333;white-space:nowrap;overflow:hidden"><i class="l">DA</i></div>
<div class="a" style="left:1604px;top:841px;width:270px;height:38px;padding-top:1px;line-height:38px;font-size:18px;color:#333;white-space:nowrap;overflow:hidden">孙策档案</div>
<div class="a" style="left:1881px;top:841px;width:142px;height:38px;padding-top:1px;line-height:38px;font-size:18px;color:#333;white-space:nowrap;overflow:hidden">合同档案</div>
<div class="a" style="left:2150px;top:841px;width:93px;height:38px;padding-top:1px;line-height:38px;font-size:18px;color:#333;white-space:nowrap;overflow:hidden">普通</div>
<div class="a" style="left:2250px;top:841px;width:93px;height:38px;padding-top:1px;line-height:38px;font-size:18px;color:#333;white-space:nowrap;overflow:hidden"><i class="l">0</i></div>
<div class="a" style="left:2350px;top:841px;width:91px;height:38px;padding-top:1px;line-height:38px;font-size:18px;color:#333;white-space:nowrap;overflow:hidden"><i class="l">0</i></div>
<div class="a" style="left:2448px;top:841px;width:39px;height:38px;padding-top:1px;line-height:38px;font-size:18px;color:#333;white-space:nowrap;overflow:hidden"><i class="l">2016</i></div>
<div class="a" style="left:544px;top:871.5px;width:44px;height:33px;line-height:37.5px;text-align:center;font-size:18px;color:#333;overflow:hidden"><i class="l">17</i></div>
<div class="a" style="left:2487px;top:272px;width:23px;height:609px;background:#f1f1f1"></div>
<div class="a" style="left:2488px;top:297px;width:21px;height:446px;background:#c1c1c1"></div>
<svg class="a" style="left:2491px;top:279px;width:14px;height:10px"><path d="M2 8 L7 3 L12 8 Z" fill="#a3a3a3"/></svg>
<svg class="a" style="left:2491px;top:861px;width:14px;height:10px"><path d="M2 2 L7 7 L12 2 Z" fill="#505050"/></svg>
<div class="a" style="left:588px;top:881px;width:1899px;height:24px;background:#f1f1f1"></div>
<div class="a" style="left:614px;top:883px;width:1352px;height:21px;background:#c1c1c1"></div>
<svg class="a" style="left:595px;top:886px;width:10px;height:14px"><path d="M8 2 L3 7 L8 12 Z" fill="#a3a3a3"/></svg>
<svg class="a" style="left:2469px;top:886px;width:10px;height:14px"><path d="M2 2 L7 7 L2 12 Z" fill="#505050"/></svg>
<div class="a" style="left:2487px;top:881px;width:23px;height:24px;background:#dcdcdc"></div>
<div class="a" style="left:544px;top:905px;width:1966px;height:48px;background:#f4f4f4;border-top:1px solid #e6e6e6"></div>
<div class="a" style="left:553px;top:914px;width:75px;height:29px;border:1px solid #afc43e;background:#fff"></div>
<div class="a" style="left:562px;top:914px;height:29px;padding-top:1px;line-height:29px;font-size:18px;color:#000">20</div>
<svg class="a" style="left:605px;top:924px;width:14px;height:9px"><path d="M1.5 1.5 L7 7 L12.5 1.5" fill="none" stroke="#111" stroke-width="2"/></svg>
<div class="a" style="left:639px;top:911px;width:2px;height:36px;border-left:1px solid #dcdcdc;border-right:1px solid #fff"></div>
<div class="a" style="left:722px;top:911px;width:2px;height:36px;border-left:1px solid #dcdcdc;border-right:1px solid #fff"></div>
<div class="a" style="left:856px;top:911px;width:2px;height:36px;border-left:1px solid #dcdcdc;border-right:1px solid #fff"></div>
<div class="a" style="left:939px;top:911px;width:2px;height:36px;border-left:1px solid #dcdcdc;border-right:1px solid #fff"></div>
<svg class="a" style="left:654px;top:920px;width:16px;height:17px"><path d="M2 1 H4.5 V16 H2 Z M15 1 V16 L5.5 8.5 Z" fill="#b4b4b4"/></svg>
<svg class="a" style="left:694px;top:920px;width:14px;height:17px"><path d="M12 1 V16 L2 8.5 Z" fill="#a9a9a9"/></svg>
<div class="a" style="left:734px;top:913px;height:30px;padding-top:1px;line-height:30px;font-size:18px;color:#222">第</div>
<div class="a" style="left:755px;top:913px;width:40px;height:30px;border:1px solid #afc43e;background:#fff;line-height:28px;padding-left:6px;font-size:18px;color:#000">1</div>
<div class="a" style="left:797px;top:913px;height:30px;padding-top:1px;line-height:30px;font-size:18px;color:#222;white-space:nowrap">共<i class="l">2</i>页</div>
<svg class="a" style="left:873px;top:920px;width:14px;height:17px"><path d="M2 1 V16 L12 8.5 Z" fill="#222"/></svg>
<svg class="a" style="left:910px;top:920px;width:16px;height:17px"><path d="M1 1 V16 L10.5 8.5 Z M11.5 1 H14 V16 H11.5 Z" fill="#222"/></svg>
<svg class="a" style="left:952px;top:919px;width:18px;height:19px"><path d="M9 3.5 A6 6 0 1 0 15 9.5" fill="none" stroke="#666" stroke-width="2.4"/><path d="M7 0.5 L12 3.5 L7 7 Z" fill="#666"/></svg>
<div class="a" style="left:2200px;top:913px;width:300px;height:30px;padding-top:1px;line-height:30px;font-size:18px;color:#333;text-align:right;white-space:nowrap">显示<i class="l">1</i>到<i class="l">20,</i>共<i class="l">35</i>记录</div>
<div class="a" style="left:541px;top:979px;width:1992px;height:452px;border-top:2px solid #afc43e;border-left:3px solid #afc43e;border-right:1px solid #afc43e;background:#f9f9f9"></div>
<div class="a" style="left:2530px;top:981px;width:1px;height:450px;background:#afc43e"></div>
<div class="a" style="left:541px;top:126px;width:3px;height:1305px;background:#afc43e"></div>
<div class="a" style="left:544px;top:983px;width:127px;height:41px;background:linear-gradient(#e6f1fb,#dcebf8);border-bottom:2px solid #b9dbf3"></div>
<div class="a" style="left:552px;top:990px;height:36px;padding-top:1px;line-height:36px;font-size:18px;color:#333">文件管理</div>
<div class="a" style="left:676px;top:983px;width:128px;height:41px;background:linear-gradient(#e6f1fb,#dcebf8);border-bottom:2px solid #b9dbf3"></div>
<div class="a" style="left:684px;top:990px;height:36px;padding-top:1px;line-height:36px;font-size:18px;color:#333">档案借阅</div>
<div class="a" style="left:808px;top:983px;width:134px;height:43px;border:2px solid #4fa3f2;border-bottom:none;background:#fff"></div>
<div class="a" style="left:818px;top:994px;height:36px;padding-top:1px;line-height:36px;font-size:18px;font-weight:bold;color:#0000ff;-webkit-text-stroke:0.35px currentColor">档案转移</div>
<div class="a" style="left:2506px;top:982px;width:24px;height:42px;background:#f2f2f2"></div>
<div class="a" style="left:2507px;top:1002px;width:22px;height:1px;background:#cfcfcf"></div>
<svg class="a" style="left:2511px;top:986px;width:14px;height:10px"><path d="M2 8 L7 3 L12 8 Z" fill="#9a9a9a"/></svg>
<svg class="a" style="left:2511px;top:1007px;width:14px;height:10px"><path d="M2 2 L7 7 L12 2 Z" fill="#505050"/></svg>
<div class="a" style="left:544px;top:1024px;width:1987px;height:2px;background:#afc43e"></div>
<div class="a" style="left:544px;top:1026px;width:1986px;height:45px;background:#f4f4f4"></div>
<svg class="a" style="left:557px;top:1038px;width:21px;height:21px;"><use href="#i-add"/></svg>
<div class="a" style="left:586px;top:1029px;height:38px;padding-top:1px;line-height:38px;color:#0000ff;font-size:18px;white-space:nowrap">增加</div>
<svg class="a" style="left:642px;top:1040px;width:24px;height:16px;"><use href="#i-remove"/></svg>
<div class="a" style="left:671px;top:1029px;height:38px;padding-top:1px;line-height:38px;color:#0000ff;font-size:18px;white-space:nowrap">删除</div>
<svg class="a" style="left:728px;top:1036px;width:24px;height:24px;"><use href="#i-design"/></svg>
<div class="a" style="left:757px;top:1029px;height:38px;padding-top:1px;line-height:38px;color:#0000ff;font-size:18px;white-space:nowrap">设计</div>
<svg class="a" style="left:813px;top:1035px;width:25px;height:25px;"><use href="#i-import"/></svg>
<div class="a" style="left:843px;top:1029px;height:38px;padding-top:1px;line-height:38px;color:#0000ff;font-size:18px;white-space:nowrap">排序设置</div>
<svg class="a" style="left:936px;top:1035px;width:24px;height:26px" viewBox="0 0 24 26"><path d="M3 23 L14 10" stroke="#5b8fd8" stroke-width="5" stroke-linecap="round"/><circle cx="17" cy="7" r="6" fill="#9ab8e0"/><path d="M15 2 L19 6 L22 2" stroke="#f4f4f4" stroke-width="3" fill="none"/></svg>
<div class="a" style="left:965px;top:1029px;height:38px;padding-top:1px;line-height:38px;color:#0000ff;font-size:18px;white-space:nowrap">列设置</div>
<div class="a" style="left:631px;top:1030px;width:2px;height:38px;border-left:1px solid #dcdcdc;border-right:1px solid #fff"></div>
<div class="a" style="left:717px;top:1030px;width:2px;height:38px;border-left:1px solid #dcdcdc;border-right:1px solid #fff"></div>
<div class="a" style="left:804px;top:1030px;width:2px;height:38px;border-left:1px solid #dcdcdc;border-right:1px solid #fff"></div>
<div class="a" style="left:925px;top:1030px;width:2px;height:38px;border-left:1px solid #dcdcdc;border-right:1px solid #fff"></div>
<div class="a" style="left:544px;top:1071px;width:1986px;height:38px;background:linear-gradient(#fafafa,#ededed);border-top:1px solid #dcdcdc;border-bottom:1px solid #dcdcdc"></div>
<div class="a" style="left:544px;top:1072px;width:45px;height:74px;background:linear-gradient(90deg,#f7f7f7,#ececec)"></div>
<div class="a" style="left:544px;top:1146px;width:1826px;height:0px;border-top:1px dotted #d6d6d6"></div>
<div class="a" style="left:589px;top:1072px;width:0px;height:74px;border-left:1px dotted #d6d6d6"></div>
<div class="a" style="left:631px;top:1072px;width:0px;height:74px;border-left:1px dotted #d6d6d6"></div>
<div class="a" style="left:750px;top:1072px;width:0px;height:74px;border-left:1px dotted #d6d6d6"></div>
<div class="a" style="left:849px;top:1072px;width:0px;height:74px;border-left:1px dotted #d6d6d6"></div>
<div class="a" style="left:999px;top:1072px;width:0px;height:74px;border-left:1px dotted #d6d6d6"></div>
<div class="a" style="left:1142px;top:1072px;width:0px;height:74px;border-left:1px dotted #d6d6d6"></div>
<div class="a" style="left:1252px;top:1072px;width:0px;height:74px;border-left:1px dotted #d6d6d6"></div>
<div class="a" style="left:1450px;top:1072px;width:0px;height:74px;border-left:1px dotted #d6d6d6"></div>
<div class="a" style="left:1550px;top:1072px;width:0px;height:74px;border-left:1px dotted #d6d6d6"></div>
<div class="a" style="left:1651px;top:1072px;width:0px;height:74px;border-left:1px dotted #d6d6d6"></div>
<div class="a" style="left:1761px;top:1072px;width:0px;height:74px;border-left:1px dotted #d6d6d6"></div>
<div class="a" style="left:1860px;top:1072px;width:0px;height:74px;border-left:1px dotted #d6d6d6"></div>
<div class="a" style="left:1961px;top:1072px;width:0px;height:74px;border-left:1px dotted #d6d6d6"></div>
<div class="a" style="left:2071px;top:1072px;width:0px;height:74px;border-left:1px dotted #d6d6d6"></div>
<div class="a" style="left:2370px;top:1072px;width:0px;height:74px;border-left:1px dotted #d6d6d6"></div>
<div class="a" style="left:631px;top:1071px;width:119px;height:38px;padding-top:1px;line-height:38px;text-align:center;font-size:18px;color:#333;white-space:nowrap">操作</div>
<div class="a" style="left:750px;top:1071px;width:99px;height:38px;padding-top:1px;line-height:38px;text-align:center;font-size:18px;color:#333;white-space:nowrap">档案编号</div>
<div class="a" style="left:849px;top:1071px;width:150px;height:38px;padding-top:1px;line-height:38px;text-align:center;font-size:18px;color:#333;white-space:nowrap">档案名称</div>
<div class="a" style="left:999px;top:1071px;width:143px;height:38px;padding-top:1px;line-height:38px;text-align:center;font-size:18px;color:#333;white-space:nowrap">移交日期</div>
<div class="a" style="left:1142px;top:1071px;width:110px;height:38px;padding-top:1px;line-height:38px;text-align:center;font-size:18px;color:#333;white-space:nowrap">移交标志</div>
<div class="a" style="left:1252px;top:1071px;width:198px;height:38px;padding-top:1px;line-height:38px;text-align:center;font-size:18px;color:#333;white-space:nowrap">原部门</div>
<div class="a" style="left:1450px;top:1071px;width:100px;height:38px;padding-top:1px;line-height:38px;text-align:center;font-size:18px;color:#333;white-space:nowrap">接收部门</div>
<div class="a" style="left:1550px;top:1071px;width:101px;height:38px;padding-top:1px;line-height:38px;text-align:center;font-size:18px;color:#333;white-space:nowrap">接收人</div>
<div class="a" style="left:1651px;top:1071px;width:110px;height:38px;padding-top:1px;line-height:38px;text-align:center;font-size:18px;color:#333;white-space:nowrap">批准人</div>
<div class="a" style="left:1761px;top:1071px;width:99px;height:38px;padding-top:1px;line-height:38px;text-align:center;font-size:18px;color:#333;white-space:nowrap">移交份数</div>
<div class="a" style="left:1860px;top:1071px;width:101px;height:38px;padding-top:1px;line-height:38px;text-align:center;font-size:18px;color:#333;white-space:nowrap">自定义列<i class="l">1</i></div>
<div class="a" style="left:1961px;top:1071px;width:110px;height:38px;padding-top:1px;line-height:38px;text-align:center;font-size:18px;color:#333;white-space:nowrap">自定义列<i class="l">2</i></div>
<div class="a" style="left:2071px;top:1071px;width:299px;height:38px;padding-top:1px;line-height:38px;text-align:center;font-size:18px;color:#333;white-space:nowrap">备注</div>
<div class="ck" style="left:599px;top:1079px"></div>
<div class="a" style="left:544px;top:1108px;width:45px;height:38px;padding-top:1px;line-height:38px;text-align:center;font-size:18px;color:#333"><i class="l">1</i></div>
<div class="ck" style="left:599px;top:1116px"></div>
<svg class="a" style="left:659px;top:1111px;width:26px;height:26px;"><use href="#i-edit"/></svg>
<div class="a" style="left:690px;top:1125px;width:2px;height:16px;background:#333"></div>
<svg class="a" style="left:696px;top:1109px;width:26px;height:30px;"><use href="#i-del"/></svg>
<div class="a" style="left:757px;top:1108px;width:92px;height:38px;padding-top:1px;line-height:38px;font-size:18px;color:#333;white-space:nowrap;overflow:hidden"><i class="l">DA000034</i></div>
<div class="a" style="left:856px;top:1108px;width:143px;height:38px;padding-top:1px;line-height:38px;font-size:18px;color:#333;white-space:nowrap;overflow:hidden"><i class="l">2015</i>年财务年报</div>
<div class="a" style="left:1006px;top:1108px;width:136px;height:38px;padding-top:1px;line-height:38px;font-size:18px;color:#333;white-space:nowrap;overflow:hidden"><i class="l">2020-11-12</i></div>
<div class="a" style="left:1149px;top:1108px;width:103px;height:38px;padding-top:1px;line-height:38px;font-size:18px;color:#333;white-space:nowrap;overflow:hidden">移交</div>
<div class="a" style="left:1259px;top:1108px;width:191px;height:38px;padding-top:1px;line-height:38px;font-size:18px;color:#333;white-space:nowrap;overflow:hidden">行政办</div>
<div class="a" style="left:1457px;top:1108px;width:93px;height:38px;padding-top:1px;line-height:38px;font-size:18px;color:#333;white-space:nowrap;overflow:hidden">行政办</div>
<div class="a" style="left:1557px;top:1108px;width:94px;height:38px;padding-top:1px;line-height:38px;font-size:18px;color:#333;white-space:nowrap;overflow:hidden">李四</div>
<div class="a" style="left:1658px;top:1108px;width:103px;height:38px;padding-top:1px;line-height:38px;font-size:18px;color:#333;white-space:nowrap;overflow:hidden">司马懿</div>
<div class="a" style="left:1768px;top:1108px;width:92px;height:38px;padding-top:1px;line-height:38px;font-size:18px;color:#333;white-space:nowrap;overflow:hidden"><i class="l">1.00</i></div>
<div class="a" style="left:544px;top:1419px;width:1986px;height:1px;background:#d8d8d8"></div>
<div class="a" style="left:541px;top:1421px;width:1992px;height:1px;background:#afc43e"></div>
<div class="a" style="left:541px;top:1423px;width:1992px;height:1px;background:#afc43e"></div>
<div class="a" style="left:541px;top:1426px;width:1992px;height:1px;background:#afc43e"></div>
<div class="a" style="left:541px;top:1428px;width:1992px;height:1px;background:#afc43e"></div>
<div class="a" style="left:270px;top:1430px;width:2263px;height:1px;background:#afc43e"></div>
<div class="a" style="left:2533px;top:126px;width:26px;height:1305px;background:#f1f1f1"></div>
<div class="a" style="left:2536px;top:150px;width:21px;height:1250px;background:#c1c1c1"></div>
<svg class="a" style="left:2539px;top:132px;width:14px;height:10px"><path d="M2 8 L7 3 L12 8 Z" fill="#a3a3a3"/></svg>
<svg class="a" style="left:2539px;top:1410px;width:14px;height:10px"><path d="M2 2 L7 7 L12 2 Z" fill="#505050"/></svg></body></html>
